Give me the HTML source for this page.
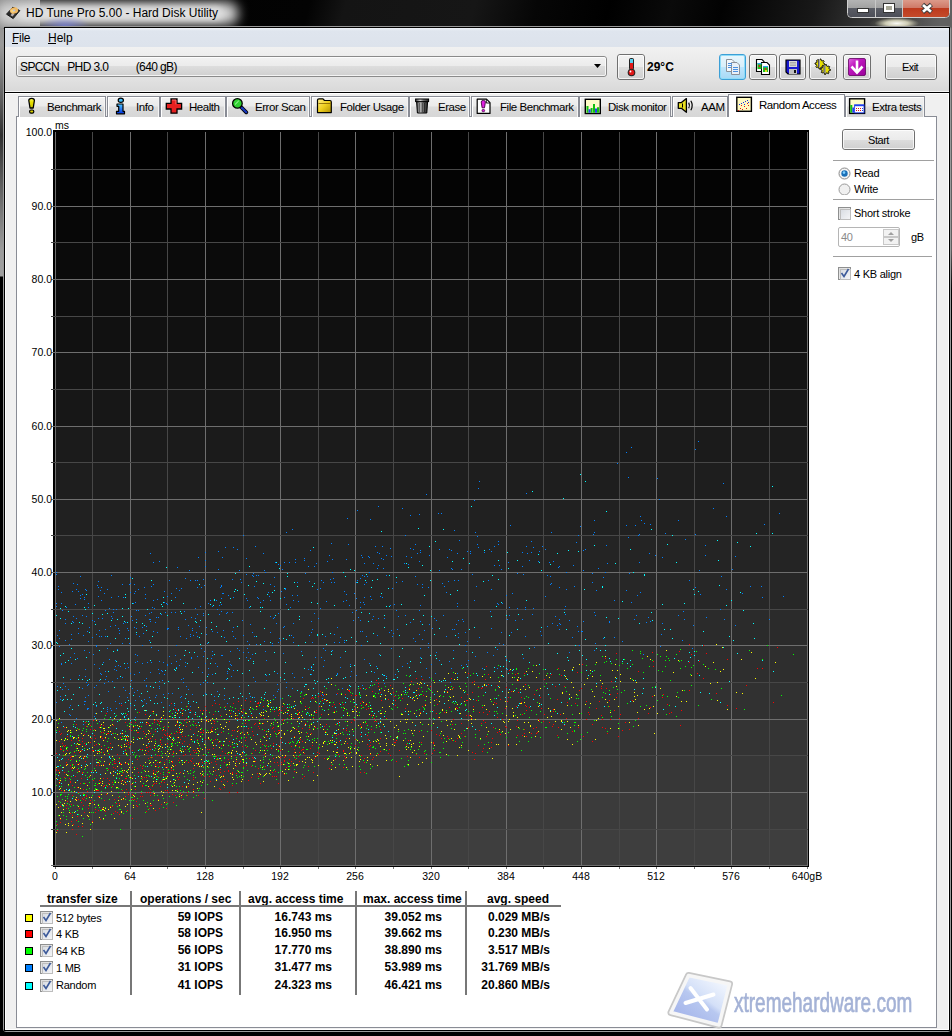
<!DOCTYPE html>
<html><head><meta charset="utf-8">
<style>
*{margin:0;padding:0;box-sizing:border-box}
html,body{width:952px;height:1036px;overflow:hidden;background:#000}
body{position:relative;font-family:"Liberation Sans",sans-serif;color:#000}
.a{position:absolute}
.t{position:absolute;white-space:pre;line-height:1}
/* frame */
#glassL{left:0;top:0;width:3px;height:280px;background:linear-gradient(#8a8a8a 0px,#9a9a9a 45px,#6a6a6a 90px,#303030 135px,#9c9c9c 250px,#a0a0a0 276px,#000 277px)}
#glassR{left:950px;top:0;width:2px;height:290px;background:linear-gradient(#6a6a6a,#5e5e5e 250px,#000 290px)}
#title{left:0;top:0;width:952px;height:28px;overflow:hidden;background:linear-gradient(105deg,#000 0,#030303 300px,#141414 335px,#161616 460px,#060606 520px,#000 590px,#0a0a0a 650px,#020202 700px,#181818 790px,#333 840px,#444 880px,#555 920px,#666 952px)}
#frame1{left:3px;top:26px;width:948px;height:1006px;border:1px solid #9a9a9a;border-radius:3px}
#frame2{left:4px;top:27px;width:946px;height:1004px;border:1px solid #000}
#client{left:5px;top:28px;width:944px;height:1002px;background:#f0f0f0;border-right:1px solid #fff;border-bottom:1px solid #fff;border-left:1px solid #fff}
#menubar{left:5px;top:28px;width:944px;height:19px;background:linear-gradient(#eef2f8,#dfe5ee 3px,#dde3ec)}
#toolbar{left:5px;top:47px;width:944px;height:44px;background:linear-gradient(#f1f1f1,#e6e6e6 25px,#d9d9d9 44px)}
.btn{position:absolute;border:1px solid #707070;border-radius:3px;background:linear-gradient(#f2f2f2,#ebebeb 50%,#dddddd 50%,#cfcfcf)}
.btn:before{content:"";position:absolute;left:0;top:0;right:0;bottom:0;border:1px solid rgba(255,255,255,.75);border-radius:2px}
.tab{position:absolute;top:96px;height:21px;border:1px solid #898c95;border-bottom:none;background:linear-gradient(#f2f2f2,#ebebeb 45%,#dcdcdc 50%,#d6d6d6);box-shadow:inset 1px 1px 0 #fff,inset -1px 0 0 #f4f4f4}
.tab .t{font-size:11.5px;top:4.6px;letter-spacing:-0.45px}
.u{font-size:11px;letter-spacing:-0.25px}
.chk{position:absolute;width:13px;height:13px;border:1px solid #8e8f8f;background:linear-gradient(135deg,#dcdcdc,#f6f6f6)}
.chk:after{content:"";position:absolute;left:1px;top:1px;width:9px;height:9px;border:1px solid #bdbdbd;background:linear-gradient(135deg,#d9dde3,#f4f5f7)}
.sep{position:absolute;height:1px;background:#a0a0a0}
</style></head><body>
<div id="glassL" class="a"></div>
<div id="glassR" class="a"></div>
<div id="title" class="a">
  <div class="a" style="left:0;top:0;width:40px;height:28px;background:linear-gradient(90deg,#8c8c8c,#9a9a9a)"></div>
  <div class="a" style="left:-4px;top:2px;width:242px;height:23px;border-radius:10px;background:#d4d4d4;filter:blur(6px)"></div>
  <div class="a" style="left:18px;top:7px;width:205px;height:13px;border-radius:6px;background:#e0e0e0;filter:blur(3px)"></div>
  <div class="a" style="left:40px;top:16px;width:50px;height:20px;background:radial-gradient(ellipse 50% 50% at 50% 50%,rgba(120,130,230,.7),rgba(120,130,230,0))"></div>
  <div class="a" style="left:866px;top:15px;width:56px;height:14px;background:radial-gradient(ellipse 50% 50% at 55% 60%,rgba(250,250,245,1),rgba(230,228,200,.85) 40%,rgba(90,90,80,.35) 80%,rgba(0,0,0,0))"></div>
  <div class="a" style="left:912px;top:0;width:40px;height:28px;background:linear-gradient(90deg,rgba(0,0,0,0),#606060 70%)"></div>
  <svg class="a" style="left:0;top:0" width="26" height="24" viewBox="0 0 26 24"><path d="M6.5 14.2L12.8 7.2L19.8 10.6L13.2 18.6Z" fill="#2a2a2a" stroke="#1a1a1a" stroke-width="1" stroke-linejoin="round"/><path d="M10.5 15.2L12.6 12.8L14.6 14L12.6 16.6Z" fill="#b8b0b0"/><ellipse cx="14" cy="10.5" rx="4.2" ry="3.1" fill="#f0b860" transform="rotate(-15 14 10.5)"/><ellipse cx="13" cy="11" rx="2" ry="1.4" fill="#f8e090" opacity=".7"/><ellipse cx="14.2" cy="10.4" rx="1.2" ry=".9" fill="#b8c0d8"/></svg>
  <div class="t" style="left:26px;top:7px;font-size:12px;color:#000">HD Tune Pro 5.00 - Hard Disk Utility</div>
  <!-- caption buttons -->
  <svg class="a" style="left:846px;top:0" width="106" height="22" viewBox="0 0 106 22">
    <defs>
      <linearGradient id="gmin" x1="0" y1="0" x2="0" y2="1"><stop offset="0" stop-color="#b4b4b4"/><stop offset=".45" stop-color="#a2a2a2"/><stop offset=".5" stop-color="#5a5c64"/><stop offset="1" stop-color="#4c4e58"/></linearGradient>
      <linearGradient id="gcls" x1="0" y1="0" x2="0" y2="1"><stop offset="0" stop-color="#dc9a8a"/><stop offset=".45" stop-color="#cf7a68"/><stop offset=".5" stop-color="#bd3a1e"/><stop offset="1" stop-color="#c44a2a"/></linearGradient>
    </defs>
    <path d="M1.5 0V13.5Q1.5 17.5 5.5 17.5H99.5Q103.5 17.5 103.5 13.5V0" fill="#2a2a2a" stroke="#d0d0d0" stroke-width="1"/>
    <path d="M2 0H29V17H6Q2 17 2 13Z" fill="url(#gmin)"/>
    <path d="M30 0H56V17H30Z" fill="url(#gmin)"/>
    <path d="M57 0H103V13Q103 17 99 17H57Z" fill="url(#gcls)"/>
    <path d="M29.5 0V17M56.5 0V17" stroke="#c8c8c8" stroke-width="1"/>
    <rect x="11.5" y="8.5" width="11" height="4" fill="#fff" stroke="#333" stroke-width="1"/>
    <rect x="37.5" y="3.5" width="11" height="9" fill="none" stroke="#333" stroke-width="1"/>
    <rect x="39" y="5" width="8" height="6" fill="none" stroke="#fff" stroke-width="2"/>
    <rect x="40" y="6" width="6" height="4" fill="#a8a898"/>
    <path d="M76.6 4.6L85.4 12.2M85.4 4.6L76.6 12.2" stroke="#3a3a3a" stroke-width="4.6" stroke-linecap="butt"/>
    <path d="M77 5L85 11.8M85 5L77 11.8" stroke="#fff" stroke-width="2.8" stroke-linecap="butt"/>
  </svg>
</div>
<div id="frame1" class="a"></div>
<div id="frame2" class="a"></div>
<div id="client" class="a"></div>
<div id="menubar" class="a"></div>
<div class="t" style="left:12px;top:32px;font-size:12px;letter-spacing:-0.3px">File</div>
<div class="a" style="left:12px;top:43px;width:6px;height:1px;background:#000"></div>
<div class="t" style="left:48px;top:32px;font-size:12px">Help</div>
<div class="a" style="left:48px;top:43px;width:8px;height:1px;background:#000"></div>
<div id="toolbar" class="a"></div>
<div class="a" style="left:5px;top:91px;width:944px;height:1px;background:#f6f6f6"></div>
<div class="a" style="left:5px;top:92px;width:944px;height:1px;background:#000"></div>
<div class="a" style="left:5px;top:93px;width:944px;height:1px;background:#fff"></div>
<!-- drive combo -->
<div class="btn" style="left:16px;top:56px;width:591px;height:21px;border-color:#8a8a8a"></div>
<div class="t" style="left:20px;top:61px;font-size:12px;letter-spacing:-0.6px">SPCCN   PHD 3.0          (640 gB)</div>
<svg class="a" style="left:594px;top:64px" width="8" height="5"><path d="M0 0H7L3.5 4Z" fill="#000"/></svg>
<!-- thermometer -->
<div class="btn" style="left:617px;top:54px;width:28px;height:26px"></div>
<svg class="a" style="left:624px;top:57px" width="14" height="20" viewBox="0 0 14 20"><rect x="5" y="1" width="5" height="12" rx="2" fill="#222"/><rect x="6" y="2" width="3" height="4" fill="#58d0f0"/><rect x="6" y="6" width="3" height="8" fill="#e01818"/><circle cx="7.5" cy="15.5" r="3.8" fill="#222"/><circle cx="7.5" cy="15.5" r="2.8" fill="#e01818"/><circle cx="6.5" cy="14.5" r="0.9" fill="#fff"/></svg>
<div class="t" style="left:647px;top:61px;font-size:12px;font-weight:bold">29°C</div>
<!-- toolbar buttons -->
<div class="a" style="left:719px;top:54px;width:27px;height:26px;border:1px solid #3c9fd6;border-radius:3px;background:linear-gradient(#e8f6fd,#d8effa 50%,#bee6fd 50%,#a7d9f5);box-shadow:inset 0 0 0 1px #8fdcf8"></div>
<svg class="a" style="left:724px;top:58px" width="18" height="18" viewBox="0 0 18 18"><path d="M2.5 1.5H8L10 3.5V13.5H2.5Z" fill="#f4f8fc" stroke="#8a9098"/><path d="M7.5 4.5H13L15.5 7V16.5H7.5Z" fill="#e8f0f8" stroke="#8a9098"/><path d="M4 5.5H8M4 7.5H8M4 9.5H7M9 9.5H14M9 11.5H14M9 13.5H14" stroke="#4a90e0" fill="none"/></svg>
<div class="btn" style="left:749px;top:54px;width:28px;height:26px"></div>
<svg class="a" style="left:754px;top:58px" width="18" height="18" viewBox="0 0 18 18"><path d="M2.5 1.5H8L10 3.5V13.5H2.5Z" fill="#fff" stroke="#000" stroke-width="1.1"/><path d="M7.5 4.5H13L15.5 7V16.5H7.5Z" fill="#fff" stroke="#000" stroke-width="1.1"/><rect x="3.5" y="5" width="4" height="6" fill="#20c020"/><rect x="3.5" y="5" width="4" height="1.3" fill="#30a0f0"/><rect x="9" y="8" width="5" height="6" fill="#20c020"/><rect x="9" y="8" width="5" height="1.3" fill="#30a0f0"/><circle cx="5.5" cy="8" r="1" fill="#e02020"/><circle cx="11.5" cy="11" r="1" fill="#e02020"/><rect x="11" y="12" width="2" height="2" fill="#e0e020"/></svg>
<div class="btn" style="left:779px;top:54px;width:27px;height:26px"></div>
<svg class="a" style="left:784px;top:58px" width="18" height="18" viewBox="0 0 18 18"><path d="M2 2H16V16H4L2 14Z" fill="#1818d0" stroke="#000" stroke-width="1.2"/><rect x="5" y="3" width="8" height="6" fill="#d8d8d8"/><path d="M6 4.5H12M6 6H12M6 7.5H12" stroke="#999" stroke-width="0.7"/><rect x="5" y="11" width="8" height="5" fill="#c0c0c0"/><rect x="10" y="12" width="2" height="3" fill="#111"/></svg>
<div class="btn" style="left:809px;top:54px;width:28px;height:26px"></div>
<svg class="a" style="left:813px;top:57px" width="20" height="20" viewBox="0 0 20 20"><path d="M12.0 7.0L11.9 8.0L10.3 8.4L10.0 9.0L10.5 10.5L9.8 11.2L8.4 10.3L7.7 10.5L7.0 12.0L6.0 11.9L5.6 10.3L5.0 10.0L3.5 10.5L2.8 9.8L3.7 8.4L3.5 7.7L2.0 7.0L2.1 6.0L3.7 5.6L4.0 5.0L3.5 3.5L4.2 2.8L5.6 3.7L6.3 3.5L7.0 2.0L8.0 2.1L8.4 3.7L9.0 4.0L10.5 3.5L11.2 4.2L10.3 5.6L10.5 6.3Z" fill="#e8e000" stroke="#111" stroke-width="1"/><path d="M17.5 12.5L17.4 13.5L15.8 13.9L15.5 14.5L16.0 16.0L15.3 16.7L13.9 15.8L13.2 16.0L12.5 17.5L11.5 17.4L11.1 15.8L10.5 15.5L9.0 16.0L8.3 15.3L9.2 13.9L9.0 13.2L7.5 12.5L7.6 11.5L9.2 11.1L9.5 10.5L9.0 9.0L9.7 8.3L11.1 9.2L11.8 9.0L12.5 7.5L13.5 7.6L13.9 9.2L14.5 9.5L16.0 9.0L16.7 9.7L15.8 11.1L16.0 11.8Z" fill="#e8e000" stroke="#111" stroke-width="1"/><path d="M6 2V10M11.5 8V16" stroke="#555" stroke-width="2"/><path d="M6.5 2V10M12 8V16" stroke="#ddd" stroke-width=".6"/></svg>
<div class="btn" style="left:843px;top:54px;width:28px;height:26px"></div>
<svg class="a" style="left:847px;top:57px" width="20" height="20" viewBox="0 0 20 20"><defs><linearGradient id="gpur" x1="0" y1="0" x2="1" y2="1"><stop offset="0" stop-color="#e070e0"/><stop offset=".35" stop-color="#c018c0"/><stop offset="1" stop-color="#9a009a"/></linearGradient></defs><rect x="1.5" y="1.5" width="17" height="17" rx="1.5" fill="url(#gpur)" stroke="#600060" stroke-width=".8"/><path d="M10 3.5V14.5" stroke="#fff" stroke-width="2.6"/><path d="M4.5 9.5L10 15.5L15.5 9.5" stroke="#fff" stroke-width="2.6" fill="none"/></svg>
<div class="btn" style="left:885px;top:54px;width:52px;height:26px"></div>
<div class="t" style="left:902px;top:62px;font-size:11px;letter-spacing:-0.6px">Exit</div>

<div class="a" style="left:16px;top:116px;width:921px;height:912px;border:1px solid #898c95;background:#fff"></div>
<div class="tab" style="left:18px;width:88px"><div class="t" style="left:28px">Benchmark</div></div>
<div class="tab" style="left:107px;width:53px"><div class="t" style="left:28px">Info</div></div>
<div class="tab" style="left:160px;width:66px"><div class="t" style="left:28px">Health</div></div>
<div class="tab" style="left:226px;width:84px"><div class="t" style="left:28px">Error Scan</div></div>
<div class="tab" style="left:311px;width:98px"><div class="t" style="left:28px">Folder Usage</div></div>
<div class="tab" style="left:409px;width:61px"><div class="t" style="left:28px">Erase</div></div>
<div class="tab" style="left:471px;width:108px"><div class="t" style="left:28px">File Benchmark</div></div>
<div class="tab" style="left:579px;width:92px"><div class="t" style="left:28px">Disk monitor</div></div>
<div class="tab" style="left:672px;width:56px"><div class="t" style="left:28px">AAM</div></div>
<div class="tab" style="left:728px;top:94px;width:117px;height:23px;background:#fff;box-shadow:none"><div class="t" style="left:30px">Random Access</div></div>
<div class="tab" style="left:845px;width:80px"><div class="t" style="left:26px">Extra tests</div></div>
<svg class="a" style="left:0;top:0" width="952" height="120" viewBox="0 0 952 120">
 <defs>
  <linearGradient id="gy" x1="0" y1="0" x2="0" y2="1"><stop offset="0" stop-color="#f8f860"/><stop offset=".4" stop-color="#e8e000"/><stop offset="1" stop-color="#c8c000"/></linearGradient>
  <linearGradient id="gb" x1="0" y1="0" x2="0" y2="1"><stop offset="0" stop-color="#50c8ff"/><stop offset="1" stop-color="#0030e0"/></linearGradient>
  <linearGradient id="gf" x1="0" y1="0" x2="1" y2="1"><stop offset="0" stop-color="#fff090"/><stop offset=".5" stop-color="#f0d020"/><stop offset="1" stop-color="#b09000"/></linearGradient>
  <linearGradient id="gt" x1="0" y1="0" x2="1" y2="0"><stop offset="0" stop-color="#303030"/><stop offset=".35" stop-color="#d8d8d8"/><stop offset=".6" stop-color="#707070"/><stop offset="1" stop-color="#202020"/></linearGradient>
 </defs>
 <!-- benchmark ! -->
 <path d="M28.8 100.5Q28.8 98.3 31.6 98.3Q34.4 98.3 34.4 100.5L33.2 108H30Z" fill="url(#gy)" stroke="#000" stroke-width="1.3" stroke-linejoin="round"/>
 <rect x="29.6" y="110" width="4.2" height="3.2" rx="1.4" fill="#d8d000" stroke="#000" stroke-width="1.2"/>
 <!-- info i -->
 <ellipse cx="120.8" cy="100.3" rx="2.6" ry="2.1" fill="#40c0ff" stroke="#000" stroke-width="1.2"/>
 <path d="M117 104H123V111.3H124.5V113.8H116.5V111.3H118.7V106.3H117Z" fill="url(#gb)" stroke="#000" stroke-width="1.2" stroke-linejoin="round"/>
 <!-- health cross -->
 <path d="M171 99H177V103.3H181.6V109H177V113.2H171V109H166.3V103.3H171Z" fill="#e62020" stroke="#000" stroke-width="1.3"/>
 <path d="M172 100H176V104.3" stroke="#ff8080" stroke-width=".8" fill="none"/>
 <!-- error scan -->
 <path d="M241.5 107.5L246.3 112.3" stroke="#000" stroke-width="3.8" stroke-linecap="round"/>
 <path d="M241.5 107.5L246.3 112.3" stroke="#1838c0" stroke-width="2" stroke-linecap="round"/>
 <circle cx="237.4" cy="103.4" r="4.8" fill="#30d030" stroke="#000" stroke-width="1.3"/>
 <path d="M235 104.5L238.8 100.8" stroke="#b0ffb0" stroke-width="1"/>
 <!-- folder -->
 <path d="M317.5 100Q317.5 98.8 319 98.8H323L324.5 100.5H330Q331.3 100.5 331.3 102V112.6H317.5Z" fill="url(#gf)" stroke="#000" stroke-width="1.2" stroke-linejoin="round"/>
 <path d="M318.5 103.5H330.5" stroke="#806000" stroke-width=".8"/>
 <!-- erase trash -->
 <rect x="415.6" y="99" width="13" height="2.6" fill="url(#gt)" stroke="#000" stroke-width="1"/>
 <path d="M416.6 101.8H427.6L426.8 113H417.4Z" fill="url(#gt)" stroke="#000" stroke-width="1"/>
 <path d="M419.8 103V112M422.2 103V112M424.6 103V112" stroke="#111" stroke-width=".7"/>
 <!-- file benchmark -->
 <path d="M477.2 99.2H486.5L490 102.7V113.4H477.2Z" fill="#fff" stroke="#000" stroke-width="1.2" stroke-linejoin="round"/>
 <path d="M486.3 99.5V103H489.8" fill="none" stroke="#000" stroke-width=".9"/>
 <path d="M481.2 102Q481.2 100.4 483.3 100.4Q485.4 100.4 485.4 102L484.5 107.8H482.1Z" fill="#e020e0" stroke="#400040" stroke-width=".9"/>
 <rect x="482" y="109.5" width="2.6" height="2.2" rx=".8" fill="#e020e0" stroke="#400040" stroke-width=".7"/>
 <!-- disk monitor -->
 <rect x="585.3" y="99.3" width="15" height="14.2" fill="#fffcc8" stroke="#000" stroke-width="1.4"/>
 <path d="M586.5 112.7V106H588.5V112.7ZM590.6 112.7V108H592.6V112.7ZM593 112.7V104H595V112.7ZM597 112.7V107.3H599.2V112.7Z" fill="#10c010"/>
 <path d="M588.5 112.7V109.2H590.6V112.7ZM595 112.7V108.5H597V112.7Z" fill="#2040f0"/>
 <!-- AAM speaker -->
 <path d="M678.3 102.6H681.4L686.4 98.6V112.3L681.4 108.3H678.3Z" fill="#e8e020" stroke="#000" stroke-width="1.3" stroke-linejoin="round"/>
 <path d="M682.5 103.5V107.5" stroke="#000" stroke-width="1"/>
 <path d="M688.7 102.6Q690.2 105.4 688.7 108.3M690.8 100.8Q693.7 105.4 690.8 110.2" stroke="#000" stroke-width="1.2" fill="none"/>
 <!-- random access -->
 <rect x="736.8" y="97.3" width="14.6" height="14" fill="#fffac0" stroke="#000" stroke-width="1.4"/>
 <path d="M738 110h1v1h-1zM740 108h1v1h-1zM742 109h1v1h-1zM744 106h1v1h-1zM746 108h1v1h-1zM748 105h1v1h-1zM741 105h1v1h-1zM747 103h1v1h-1z" fill="#e01818"/>
 <path d="M739 104h1v1h-1zM741 103h1v1h-1zM743 102h1v1h-1zM745 101h1v1h-1zM747 100h1v1h-1zM748 102h1v1h-1zM744 104h1v1h-1z" fill="#1830e0"/>
 <!-- extra tests -->
 <rect x="849.6" y="98.8" width="15" height="14.6" fill="#fffcc8" stroke="#000" stroke-width="1.4"/>
 <rect x="850.3" y="105" width="2" height="7.7" fill="#10c010"/>
 <rect x="852.3" y="107.5" width="1.8" height="5.2" fill="#2040f0"/>
 <rect x="854.6" y="104.8" width="9.4" height="8" fill="#fff" stroke="#2040f0" stroke-width=".9"/>
 <rect x="854.6" y="104.8" width="9.4" height="1.4" fill="#2040f0"/>
 <path d="M856 108h1v1h-1zM858 108h1v1h-1zM860 108h1v1h-1zM856 110h1v1h-1zM858 110h1v1h-1zM860 110h1v1h-1z" fill="#e01818"/>
 <path d="M862 108h1v1h-1zM862 110h1v1h-1z" fill="#2040e0"/>
</svg>

<div class="a" style="left:53px;top:130px;width:756px;height:737px;background:#000"></div>
<div class="a" style="left:55px;top:131px;width:753px;height:39px;background:rgb(1,1,1)"></div>
<div class="a" style="left:55px;top:169px;width:753px;height:38px;background:rgb(4,4,4)"></div>
<div class="a" style="left:55px;top:206px;width:753px;height:37px;background:rgb(7,7,7)"></div>
<div class="a" style="left:55px;top:242px;width:753px;height:38px;background:rgb(11,11,11)"></div>
<div class="a" style="left:55px;top:279px;width:753px;height:38px;background:rgb(14,14,14)"></div>
<div class="a" style="left:55px;top:316px;width:753px;height:37px;background:rgb(17,17,17)"></div>
<div class="a" style="left:55px;top:352px;width:753px;height:38px;background:rgb(20,20,20)"></div>
<div class="a" style="left:55px;top:389px;width:753px;height:38px;background:rgb(23,23,23)"></div>
<div class="a" style="left:55px;top:426px;width:753px;height:37px;background:rgb(27,27,27)"></div>
<div class="a" style="left:55px;top:462px;width:753px;height:38px;background:rgb(30,30,30)"></div>
<div class="a" style="left:55px;top:499px;width:753px;height:37px;background:rgb(33,33,33)"></div>
<div class="a" style="left:55px;top:535px;width:753px;height:38px;background:rgb(36,36,36)"></div>
<div class="a" style="left:55px;top:572px;width:753px;height:38px;background:rgb(39,39,39)"></div>
<div class="a" style="left:55px;top:609px;width:753px;height:37px;background:rgb(43,43,43)"></div>
<div class="a" style="left:55px;top:645px;width:753px;height:38px;background:rgb(46,46,46)"></div>
<div class="a" style="left:55px;top:682px;width:753px;height:38px;background:rgb(49,49,49)"></div>
<div class="a" style="left:55px;top:719px;width:753px;height:37px;background:rgb(52,52,52)"></div>
<div class="a" style="left:55px;top:755px;width:753px;height:38px;background:rgb(55,55,55)"></div>
<div class="a" style="left:55px;top:792px;width:753px;height:38px;background:rgb(59,59,59)"></div>
<div class="a" style="left:55px;top:829px;width:753px;height:37px;background:rgb(62,62,62)"></div>
<svg class="a" style="left:0;top:0" width="952" height="1036" shape-rendering="crispEdges">
<rect x="55" y="132" width="1" height="734" fill="#6e6e6e"/>
<rect x="92" y="132" width="1" height="734" fill="#474747"/>
<rect x="130" y="132" width="1" height="734" fill="#6e6e6e"/>
<rect x="167" y="132" width="1" height="734" fill="#474747"/>
<rect x="205" y="132" width="1" height="734" fill="#6e6e6e"/>
<rect x="243" y="132" width="1" height="734" fill="#474747"/>
<rect x="280" y="132" width="1" height="734" fill="#6e6e6e"/>
<rect x="318" y="132" width="1" height="734" fill="#474747"/>
<rect x="355" y="132" width="1" height="734" fill="#6e6e6e"/>
<rect x="393" y="132" width="1" height="734" fill="#474747"/>
<rect x="431" y="132" width="1" height="734" fill="#6e6e6e"/>
<rect x="468" y="132" width="1" height="734" fill="#474747"/>
<rect x="506" y="132" width="1" height="734" fill="#6e6e6e"/>
<rect x="543" y="132" width="1" height="734" fill="#474747"/>
<rect x="581" y="132" width="1" height="734" fill="#6e6e6e"/>
<rect x="619" y="132" width="1" height="734" fill="#474747"/>
<rect x="656" y="132" width="1" height="734" fill="#6e6e6e"/>
<rect x="694" y="132" width="1" height="734" fill="#474747"/>
<rect x="731" y="132" width="1" height="734" fill="#6e6e6e"/>
<rect x="769" y="132" width="1" height="734" fill="#474747"/>
<rect x="807" y="132" width="1" height="734" fill="#6e6e6e"/>
<rect x="55" y="865" width="753" height="1" fill="#6e6e6e"/>
<rect x="55" y="829" width="753" height="1" fill="#474747"/>
<rect x="55" y="792" width="753" height="1" fill="#6e6e6e"/>
<rect x="55" y="755" width="753" height="1" fill="#474747"/>
<rect x="55" y="719" width="753" height="1" fill="#6e6e6e"/>
<rect x="55" y="682" width="753" height="1" fill="#474747"/>
<rect x="55" y="645" width="753" height="1" fill="#6e6e6e"/>
<rect x="55" y="609" width="753" height="1" fill="#474747"/>
<rect x="55" y="572" width="753" height="1" fill="#6e6e6e"/>
<rect x="55" y="535" width="753" height="1" fill="#474747"/>
<rect x="55" y="499" width="753" height="1" fill="#6e6e6e"/>
<rect x="55" y="462" width="753" height="1" fill="#474747"/>
<rect x="55" y="426" width="753" height="1" fill="#6e6e6e"/>
<rect x="55" y="389" width="753" height="1" fill="#474747"/>
<rect x="55" y="352" width="753" height="1" fill="#6e6e6e"/>
<rect x="55" y="316" width="753" height="1" fill="#474747"/>
<rect x="55" y="279" width="753" height="1" fill="#6e6e6e"/>
<rect x="55" y="242" width="753" height="1" fill="#474747"/>
<rect x="55" y="206" width="753" height="1" fill="#6e6e6e"/>
<rect x="55" y="169" width="753" height="1" fill="#474747"/>
<path fill="#ffff00" d="M325 732h1v1h-1zM539 703h1v1h-1zM425 705h1v1h-1zM137 725h1v1h-1zM167 776h1v1h-1zM513 712h1v1h-1zM56 767h1v1h-1zM463 690h1v1h-1zM442 709h1v1h-1zM242 752h1v1h-1zM168 722h1v1h-1zM158 749h1v1h-1zM149 716h1v1h-1zM231 756h1v1h-1zM260 774h1v1h-1zM285 712h1v1h-1zM742 693h1v1h-1zM439 696h1v1h-1zM323 729h1v1h-1zM710 683h1v1h-1zM133 805h1v1h-1zM112 747h1v1h-1zM318 765h1v1h-1zM70 730h1v1h-1zM67 731h1v1h-1zM265 756h1v1h-1zM241 775h1v1h-1zM564 670h1v1h-1zM327 734h1v1h-1zM265 774h1v1h-1zM256 744h1v1h-1zM146 781h1v1h-1zM59 782h1v1h-1zM124 746h1v1h-1zM366 704h1v1h-1zM127 740h1v1h-1zM197 782h1v1h-1zM56 778h1v1h-1zM470 715h1v1h-1zM110 725h1v1h-1zM154 793h1v1h-1zM520 703h1v1h-1zM263 715h1v1h-1zM486 709h1v1h-1zM334 744h1v1h-1zM400 721h1v1h-1zM87 785h1v1h-1zM279 709h1v1h-1zM262 767h1v1h-1zM510 729h1v1h-1zM193 791h1v1h-1zM310 719h1v1h-1zM75 799h1v1h-1zM205 717h1v1h-1zM177 721h1v1h-1zM108 727h1v1h-1zM458 735h1v1h-1zM201 812h1v1h-1zM676 696h1v1h-1zM305 709h1v1h-1zM314 711h1v1h-1zM333 760h1v1h-1zM356 711h1v1h-1zM108 731h1v1h-1zM229 710h1v1h-1zM143 744h1v1h-1zM211 723h1v1h-1zM88 742h1v1h-1zM649 708h1v1h-1zM133 795h1v1h-1zM353 711h1v1h-1zM167 784h1v1h-1zM513 716h1v1h-1zM347 689h1v1h-1zM101 765h1v1h-1zM484 705h1v1h-1zM605 656h1v1h-1zM547 717h1v1h-1zM294 701h1v1h-1zM106 734h1v1h-1zM124 770h1v1h-1zM579 713h1v1h-1zM285 769h1v1h-1zM120 719h1v1h-1zM524 722h1v1h-1zM335 767h1v1h-1zM294 708h1v1h-1zM200 729h1v1h-1zM215 732h1v1h-1zM142 738h1v1h-1zM68 823h1v1h-1zM516 744h1v1h-1zM242 752h1v1h-1zM282 771h1v1h-1zM176 753h1v1h-1zM407 704h1v1h-1zM63 767h1v1h-1zM198 750h1v1h-1zM65 824h1v1h-1zM98 805h1v1h-1zM647 656h1v1h-1zM345 753h1v1h-1zM223 728h1v1h-1zM270 770h1v1h-1zM512 677h1v1h-1zM186 786h1v1h-1zM305 762h1v1h-1zM361 727h1v1h-1zM191 736h1v1h-1zM267 700h1v1h-1zM417 698h1v1h-1zM554 709h1v1h-1zM108 809h1v1h-1zM587 678h1v1h-1zM56 720h1v1h-1zM408 764h1v1h-1zM453 696h1v1h-1zM103 809h1v1h-1zM219 741h1v1h-1zM457 704h1v1h-1zM59 760h1v1h-1zM327 700h1v1h-1zM439 701h1v1h-1zM264 750h1v1h-1zM389 706h1v1h-1zM137 768h1v1h-1zM126 771h1v1h-1zM194 765h1v1h-1zM119 763h1v1h-1zM187 771h1v1h-1zM611 716h1v1h-1zM296 764h1v1h-1zM184 762h1v1h-1zM155 774h1v1h-1zM617 670h1v1h-1zM231 716h1v1h-1zM681 701h1v1h-1zM266 740h1v1h-1zM268 703h1v1h-1zM538 720h1v1h-1zM401 714h1v1h-1zM300 737h1v1h-1zM223 745h1v1h-1zM518 677h1v1h-1zM216 780h1v1h-1zM572 669h1v1h-1zM78 764h1v1h-1zM224 719h1v1h-1zM268 731h1v1h-1zM615 664h1v1h-1zM147 780h1v1h-1zM450 697h1v1h-1zM356 752h1v1h-1zM383 724h1v1h-1zM328 714h1v1h-1zM657 713h1v1h-1zM181 795h1v1h-1zM210 732h1v1h-1zM128 736h1v1h-1zM72 756h1v1h-1zM132 783h1v1h-1zM562 693h1v1h-1zM480 738h1v1h-1zM94 741h1v1h-1zM313 729h1v1h-1zM247 732h1v1h-1zM308 736h1v1h-1zM346 767h1v1h-1zM170 737h1v1h-1zM635 699h1v1h-1zM241 717h1v1h-1zM327 744h1v1h-1zM331 769h1v1h-1zM121 764h1v1h-1zM76 761h1v1h-1zM216 718h1v1h-1zM416 690h1v1h-1zM457 755h1v1h-1zM392 703h1v1h-1zM94 790h1v1h-1zM559 674h1v1h-1zM446 720h1v1h-1zM517 717h1v1h-1zM270 734h1v1h-1zM562 692h1v1h-1zM71 745h1v1h-1zM65 755h1v1h-1zM61 759h1v1h-1zM148 771h1v1h-1zM146 745h1v1h-1zM122 780h1v1h-1zM293 727h1v1h-1zM68 784h1v1h-1zM305 742h1v1h-1zM114 818h1v1h-1zM357 740h1v1h-1zM62 804h1v1h-1zM171 767h1v1h-1zM595 739h1v1h-1zM277 722h1v1h-1zM454 679h1v1h-1zM345 741h1v1h-1zM317 755h1v1h-1zM124 744h1v1h-1zM296 772h1v1h-1zM68 730h1v1h-1zM446 741h1v1h-1zM633 701h1v1h-1zM493 704h1v1h-1zM72 817h1v1h-1zM183 773h1v1h-1zM175 780h1v1h-1zM94 755h1v1h-1zM326 694h1v1h-1zM443 735h1v1h-1zM173 738h1v1h-1zM502 731h1v1h-1zM442 710h1v1h-1zM100 774h1v1h-1zM419 746h1v1h-1zM523 686h1v1h-1zM126 746h1v1h-1zM296 765h1v1h-1zM333 751h1v1h-1zM316 702h1v1h-1zM88 724h1v1h-1zM347 721h1v1h-1zM329 702h1v1h-1zM465 672h1v1h-1zM448 700h1v1h-1zM178 737h1v1h-1zM386 743h1v1h-1zM506 715h1v1h-1zM534 694h1v1h-1zM112 724h1v1h-1zM64 790h1v1h-1zM340 733h1v1h-1zM133 807h1v1h-1zM291 716h1v1h-1zM605 699h1v1h-1zM201 719h1v1h-1zM148 786h1v1h-1zM237 744h1v1h-1zM344 708h1v1h-1zM90 775h1v1h-1zM202 782h1v1h-1zM102 781h1v1h-1zM347 715h1v1h-1zM471 723h1v1h-1zM200 781h1v1h-1zM198 764h1v1h-1zM278 756h1v1h-1zM133 739h1v1h-1zM146 722h1v1h-1zM180 724h1v1h-1zM237 731h1v1h-1zM83 758h1v1h-1zM408 747h1v1h-1zM299 712h1v1h-1zM167 751h1v1h-1zM82 746h1v1h-1zM416 695h1v1h-1zM101 749h1v1h-1zM102 783h1v1h-1zM101 757h1v1h-1zM83 757h1v1h-1zM550 711h1v1h-1zM154 777h1v1h-1zM170 781h1v1h-1zM473 709h1v1h-1zM322 746h1v1h-1zM122 770h1v1h-1zM226 722h1v1h-1zM524 702h1v1h-1zM199 725h1v1h-1zM379 689h1v1h-1zM89 803h1v1h-1zM390 721h1v1h-1zM426 758h1v1h-1zM467 728h1v1h-1zM355 695h1v1h-1zM197 788h1v1h-1zM77 748h1v1h-1zM267 705h1v1h-1zM412 722h1v1h-1zM124 736h1v1h-1zM153 762h1v1h-1zM276 757h1v1h-1zM405 719h1v1h-1zM538 731h1v1h-1zM99 783h1v1h-1zM121 783h1v1h-1zM444 678h1v1h-1zM337 752h1v1h-1zM386 745h1v1h-1zM751 652h1v1h-1zM596 720h1v1h-1zM482 676h1v1h-1zM426 696h1v1h-1zM208 732h1v1h-1zM335 733h1v1h-1zM121 799h1v1h-1zM413 743h1v1h-1zM412 752h1v1h-1zM386 738h1v1h-1zM231 752h1v1h-1zM201 721h1v1h-1zM219 747h1v1h-1zM66 727h1v1h-1zM484 685h1v1h-1zM279 757h1v1h-1zM205 747h1v1h-1zM282 755h1v1h-1zM386 760h1v1h-1zM202 713h1v1h-1zM471 719h1v1h-1zM567 721h1v1h-1zM205 768h1v1h-1zM104 754h1v1h-1zM414 730h1v1h-1zM727 709h1v1h-1zM107 751h1v1h-1zM380 746h1v1h-1zM466 709h1v1h-1zM569 694h1v1h-1zM98 762h1v1h-1zM87 772h1v1h-1zM705 666h1v1h-1zM96 713h1v1h-1zM118 739h1v1h-1zM297 764h1v1h-1zM232 750h1v1h-1zM406 744h1v1h-1zM123 798h1v1h-1zM561 721h1v1h-1zM134 796h1v1h-1zM420 682h1v1h-1zM78 750h1v1h-1zM245 720h1v1h-1zM66 753h1v1h-1zM173 775h1v1h-1zM172 775h1v1h-1zM385 735h1v1h-1zM236 751h1v1h-1zM74 791h1v1h-1zM741 659h1v1h-1zM529 732h1v1h-1zM563 713h1v1h-1zM145 771h1v1h-1zM208 737h1v1h-1zM138 750h1v1h-1zM99 744h1v1h-1zM66 819h1v1h-1zM259 773h1v1h-1zM98 783h1v1h-1zM118 782h1v1h-1zM499 687h1v1h-1zM250 707h1v1h-1zM121 747h1v1h-1zM352 766h1v1h-1zM153 774h1v1h-1zM271 723h1v1h-1zM160 721h1v1h-1zM266 734h1v1h-1zM327 750h1v1h-1zM276 749h1v1h-1zM208 738h1v1h-1zM437 691h1v1h-1zM513 715h1v1h-1zM119 805h1v1h-1zM103 818h1v1h-1zM94 804h1v1h-1zM678 660h1v1h-1zM600 680h1v1h-1zM139 726h1v1h-1zM654 733h1v1h-1zM130 777h1v1h-1zM261 715h1v1h-1zM256 717h1v1h-1zM561 729h1v1h-1zM69 790h1v1h-1zM173 740h1v1h-1zM311 724h1v1h-1zM78 787h1v1h-1zM141 776h1v1h-1zM241 705h1v1h-1zM521 703h1v1h-1zM414 700h1v1h-1zM470 699h1v1h-1zM414 750h1v1h-1zM377 739h1v1h-1zM489 748h1v1h-1zM359 761h1v1h-1zM396 737h1v1h-1zM168 756h1v1h-1zM115 782h1v1h-1zM411 730h1v1h-1zM114 737h1v1h-1zM567 739h1v1h-1zM309 757h1v1h-1zM179 725h1v1h-1zM592 691h1v1h-1zM110 772h1v1h-1zM265 753h1v1h-1zM87 765h1v1h-1zM644 709h1v1h-1zM297 714h1v1h-1zM448 687h1v1h-1zM160 762h1v1h-1zM446 754h1v1h-1zM373 696h1v1h-1zM336 742h1v1h-1zM615 677h1v1h-1zM226 714h1v1h-1zM217 734h1v1h-1zM366 695h1v1h-1zM475 719h1v1h-1zM182 731h1v1h-1zM352 729h1v1h-1zM131 789h1v1h-1zM284 734h1v1h-1zM420 713h1v1h-1zM77 743h1v1h-1zM390 693h1v1h-1zM60 818h1v1h-1zM629 722h1v1h-1zM242 759h1v1h-1zM214 754h1v1h-1zM385 695h1v1h-1zM270 709h1v1h-1zM392 688h1v1h-1zM84 756h1v1h-1zM290 731h1v1h-1zM288 763h1v1h-1zM585 704h1v1h-1zM68 825h1v1h-1zM235 713h1v1h-1zM329 743h1v1h-1zM284 773h1v1h-1zM80 788h1v1h-1zM307 757h1v1h-1zM136 730h1v1h-1zM125 806h1v1h-1zM518 727h1v1h-1zM126 736h1v1h-1zM235 715h1v1h-1zM406 722h1v1h-1zM376 725h1v1h-1zM285 755h1v1h-1zM451 686h1v1h-1zM241 726h1v1h-1zM322 726h1v1h-1zM461 745h1v1h-1zM357 749h1v1h-1zM335 744h1v1h-1zM213 767h1v1h-1zM288 769h1v1h-1zM209 763h1v1h-1zM402 714h1v1h-1zM202 771h1v1h-1zM241 742h1v1h-1zM410 740h1v1h-1zM260 747h1v1h-1zM183 751h1v1h-1zM468 720h1v1h-1zM202 774h1v1h-1zM484 684h1v1h-1zM433 723h1v1h-1zM232 742h1v1h-1zM380 713h1v1h-1zM66 749h1v1h-1zM206 720h1v1h-1zM499 681h1v1h-1zM299 733h1v1h-1zM288 710h1v1h-1zM349 753h1v1h-1zM357 715h1v1h-1zM302 761h1v1h-1zM220 777h1v1h-1zM121 811h1v1h-1zM164 764h1v1h-1zM164 802h1v1h-1zM224 741h1v1h-1zM775 662h1v1h-1zM189 721h1v1h-1zM232 777h1v1h-1zM198 743h1v1h-1zM300 701h1v1h-1zM610 728h1v1h-1zM530 726h1v1h-1zM200 773h1v1h-1zM153 773h1v1h-1zM524 736h1v1h-1zM255 742h1v1h-1zM362 741h1v1h-1zM80 756h1v1h-1zM505 701h1v1h-1zM172 739h1v1h-1zM255 761h1v1h-1zM126 753h1v1h-1zM220 741h1v1h-1zM469 698h1v1h-1zM468 750h1v1h-1zM245 712h1v1h-1zM419 715h1v1h-1zM237 770h1v1h-1zM198 763h1v1h-1zM281 737h1v1h-1zM128 764h1v1h-1zM174 782h1v1h-1zM376 741h1v1h-1zM421 730h1v1h-1zM74 752h1v1h-1zM394 727h1v1h-1zM459 737h1v1h-1zM231 753h1v1h-1zM76 797h1v1h-1zM360 759h1v1h-1zM145 710h1v1h-1zM336 752h1v1h-1zM200 736h1v1h-1zM332 742h1v1h-1zM150 803h1v1h-1zM246 713h1v1h-1zM270 702h1v1h-1zM329 756h1v1h-1zM128 775h1v1h-1zM637 695h1v1h-1zM163 792h1v1h-1zM170 749h1v1h-1zM149 731h1v1h-1zM78 744h1v1h-1zM221 727h1v1h-1zM422 762h1v1h-1zM378 740h1v1h-1zM125 762h1v1h-1zM103 740h1v1h-1zM176 773h1v1h-1zM420 722h1v1h-1zM252 717h1v1h-1zM572 744h1v1h-1zM344 753h1v1h-1zM323 743h1v1h-1zM419 684h1v1h-1zM406 746h1v1h-1zM186 787h1v1h-1zM149 763h1v1h-1zM228 729h1v1h-1zM252 774h1v1h-1zM105 737h1v1h-1zM229 764h1v1h-1zM334 719h1v1h-1zM103 807h1v1h-1zM104 728h1v1h-1zM117 787h1v1h-1zM160 746h1v1h-1zM636 682h1v1h-1zM63 809h1v1h-1zM121 812h1v1h-1zM114 761h1v1h-1zM245 740h1v1h-1zM60 780h1v1h-1zM237 727h1v1h-1zM113 771h1v1h-1zM155 766h1v1h-1zM439 717h1v1h-1zM121 775h1v1h-1zM320 724h1v1h-1zM213 771h1v1h-1zM218 769h1v1h-1zM459 737h1v1h-1zM112 795h1v1h-1zM573 687h1v1h-1zM535 736h1v1h-1zM351 757h1v1h-1zM72 767h1v1h-1zM348 747h1v1h-1zM311 759h1v1h-1zM423 736h1v1h-1zM132 772h1v1h-1zM620 681h1v1h-1zM526 671h1v1h-1zM95 730h1v1h-1zM173 766h1v1h-1zM66 774h1v1h-1zM471 716h1v1h-1zM561 720h1v1h-1zM713 662h1v1h-1zM317 775h1v1h-1zM350 748h1v1h-1zM357 707h1v1h-1zM294 728h1v1h-1zM618 706h1v1h-1zM315 701h1v1h-1zM182 764h1v1h-1zM264 737h1v1h-1zM61 812h1v1h-1zM388 691h1v1h-1zM367 760h1v1h-1zM220 758h1v1h-1zM490 677h1v1h-1zM410 684h1v1h-1zM183 725h1v1h-1zM82 730h1v1h-1zM101 794h1v1h-1zM121 811h1v1h-1zM169 753h1v1h-1zM232 774h1v1h-1zM579 664h1v1h-1zM158 800h1v1h-1zM541 722h1v1h-1zM359 755h1v1h-1zM492 758h1v1h-1zM212 742h1v1h-1zM56 832h1v1h-1zM434 682h1v1h-1zM145 750h1v1h-1zM105 788h1v1h-1zM444 691h1v1h-1zM363 702h1v1h-1zM132 778h1v1h-1zM154 719h1v1h-1zM596 662h1v1h-1zM154 745h1v1h-1zM373 741h1v1h-1zM100 727h1v1h-1zM457 679h1v1h-1zM96 789h1v1h-1zM266 773h1v1h-1zM67 739h1v1h-1zM283 723h1v1h-1zM486 727h1v1h-1zM84 769h1v1h-1zM156 781h1v1h-1zM417 683h1v1h-1zM315 756h1v1h-1zM172 786h1v1h-1zM327 759h1v1h-1zM236 773h1v1h-1zM501 675h1v1h-1zM164 779h1v1h-1zM412 733h1v1h-1zM331 678h1v1h-1zM399 776h1v1h-1zM201 759h1v1h-1zM388 689h1v1h-1zM370 753h1v1h-1zM205 717h1v1h-1zM64 740h1v1h-1zM638 725h1v1h-1zM381 713h1v1h-1zM129 767h1v1h-1zM392 709h1v1h-1zM158 771h1v1h-1zM243 760h1v1h-1zM499 729h1v1h-1zM233 761h1v1h-1zM162 795h1v1h-1zM169 716h1v1h-1zM81 733h1v1h-1zM135 786h1v1h-1zM155 743h1v1h-1zM117 773h1v1h-1zM76 800h1v1h-1zM241 756h1v1h-1zM133 726h1v1h-1zM398 729h1v1h-1zM571 697h1v1h-1zM156 715h1v1h-1zM295 752h1v1h-1zM261 712h1v1h-1zM81 815h1v1h-1zM99 751h1v1h-1zM525 689h1v1h-1zM245 713h1v1h-1zM448 673h1v1h-1zM78 740h1v1h-1zM308 689h1v1h-1zM504 722h1v1h-1zM506 706h1v1h-1zM56 804h1v1h-1zM269 773h1v1h-1zM197 748h1v1h-1zM413 697h1v1h-1zM80 751h1v1h-1zM153 808h1v1h-1zM455 673h1v1h-1zM243 762h1v1h-1zM235 763h1v1h-1zM650 659h1v1h-1zM175 725h1v1h-1zM69 753h1v1h-1zM207 766h1v1h-1zM109 784h1v1h-1zM83 735h1v1h-1zM293 755h1v1h-1zM620 674h1v1h-1zM299 717h1v1h-1zM338 729h1v1h-1zM177 722h1v1h-1zM295 745h1v1h-1zM408 711h1v1h-1zM305 724h1v1h-1zM447 736h1v1h-1zM284 733h1v1h-1zM126 754h1v1h-1zM301 732h1v1h-1zM253 761h1v1h-1zM114 718h1v1h-1zM322 692h1v1h-1zM459 747h1v1h-1zM103 728h1v1h-1zM281 730h1v1h-1zM394 745h1v1h-1zM212 731h1v1h-1zM155 760h1v1h-1zM198 731h1v1h-1zM279 707h1v1h-1zM363 722h1v1h-1zM288 780h1v1h-1zM92 747h1v1h-1zM460 688h1v1h-1zM573 667h1v1h-1zM90 803h1v1h-1zM146 734h1v1h-1zM117 734h1v1h-1zM488 731h1v1h-1zM555 721h1v1h-1zM70 801h1v1h-1zM181 795h1v1h-1zM124 792h1v1h-1zM243 759h1v1h-1zM570 727h1v1h-1zM79 744h1v1h-1zM116 787h1v1h-1zM251 739h1v1h-1zM270 761h1v1h-1zM403 740h1v1h-1zM228 729h1v1h-1zM105 773h1v1h-1zM190 747h1v1h-1zM686 701h1v1h-1zM407 719h1v1h-1zM96 720h1v1h-1zM451 738h1v1h-1zM172 765h1v1h-1zM430 702h1v1h-1zM59 815h1v1h-1zM510 669h1v1h-1zM113 775h1v1h-1zM236 759h1v1h-1zM347 713h1v1h-1zM262 723h1v1h-1zM114 759h1v1h-1zM104 730h1v1h-1zM161 791h1v1h-1zM73 768h1v1h-1zM133 742h1v1h-1zM101 724h1v1h-1zM240 733h1v1h-1zM191 739h1v1h-1zM303 752h1v1h-1zM159 762h1v1h-1zM66 765h1v1h-1zM180 729h1v1h-1zM410 697h1v1h-1zM149 741h1v1h-1zM212 718h1v1h-1zM410 757h1v1h-1zM213 719h1v1h-1zM528 722h1v1h-1zM565 676h1v1h-1zM171 761h1v1h-1zM396 725h1v1h-1zM148 733h1v1h-1zM104 810h1v1h-1zM228 752h1v1h-1zM312 742h1v1h-1zM590 670h1v1h-1zM107 793h1v1h-1zM380 696h1v1h-1zM246 763h1v1h-1zM101 785h1v1h-1zM660 688h1v1h-1zM369 714h1v1h-1zM100 737h1v1h-1zM549 677h1v1h-1zM91 797h1v1h-1zM87 749h1v1h-1zM180 750h1v1h-1zM594 696h1v1h-1zM66 748h1v1h-1zM566 678h1v1h-1zM317 728h1v1h-1zM78 737h1v1h-1zM293 763h1v1h-1zM238 771h1v1h-1zM291 714h1v1h-1zM397 736h1v1h-1zM358 725h1v1h-1zM755 678h1v1h-1zM111 791h1v1h-1zM455 708h1v1h-1zM215 729h1v1h-1zM431 742h1v1h-1zM533 728h1v1h-1zM723 669h1v1h-1zM153 711h1v1h-1zM235 718h1v1h-1zM602 683h1v1h-1zM607 702h1v1h-1zM198 755h1v1h-1zM598 718h1v1h-1zM213 745h1v1h-1zM199 766h1v1h-1zM411 744h1v1h-1zM244 752h1v1h-1zM233 779h1v1h-1zM204 744h1v1h-1zM225 726h1v1h-1zM104 761h1v1h-1zM76 730h1v1h-1zM409 689h1v1h-1zM291 730h1v1h-1zM353 699h1v1h-1zM447 725h1v1h-1zM139 738h1v1h-1zM140 781h1v1h-1zM158 751h1v1h-1zM169 716h1v1h-1zM414 700h1v1h-1zM199 751h1v1h-1zM177 713h1v1h-1zM332 740h1v1h-1zM122 733h1v1h-1zM92 822h1v1h-1zM370 764h1v1h-1zM411 746h1v1h-1zM166 778h1v1h-1zM331 684h1v1h-1zM66 832h1v1h-1zM212 754h1v1h-1zM298 731h1v1h-1zM148 739h1v1h-1zM187 746h1v1h-1zM316 742h1v1h-1zM305 759h1v1h-1zM110 731h1v1h-1zM376 755h1v1h-1zM82 823h1v1h-1zM653 706h1v1h-1zM128 763h1v1h-1zM148 718h1v1h-1zM127 739h1v1h-1zM720 671h1v1h-1zM162 757h1v1h-1zM314 726h1v1h-1zM717 682h1v1h-1zM614 699h1v1h-1zM69 812h1v1h-1zM268 763h1v1h-1zM311 714h1v1h-1zM373 715h1v1h-1zM182 729h1v1h-1zM179 796h1v1h-1zM56 740h1v1h-1zM67 775h1v1h-1zM283 703h1v1h-1zM81 767h1v1h-1zM128 769h1v1h-1zM181 732h1v1h-1zM79 757h1v1h-1zM65 754h1v1h-1zM578 725h1v1h-1zM226 738h1v1h-1zM129 781h1v1h-1zM377 765h1v1h-1zM58 807h1v1h-1zM145 762h1v1h-1zM634 696h1v1h-1zM540 688h1v1h-1zM331 762h1v1h-1zM87 815h1v1h-1zM175 715h1v1h-1zM64 803h1v1h-1zM134 769h1v1h-1zM63 805h1v1h-1zM99 797h1v1h-1zM330 740h1v1h-1zM90 737h1v1h-1zM110 807h1v1h-1zM546 675h1v1h-1zM182 713h1v1h-1zM181 751h1v1h-1zM85 783h1v1h-1zM441 731h1v1h-1zM356 753h1v1h-1zM282 749h1v1h-1zM321 706h1v1h-1zM90 829h1v1h-1zM151 741h1v1h-1zM302 717h1v1h-1zM618 728h1v1h-1zM459 736h1v1h-1zM334 712h1v1h-1zM267 721h1v1h-1zM60 788h1v1h-1zM532 671h1v1h-1zM78 806h1v1h-1zM100 778h1v1h-1zM367 757h1v1h-1zM455 709h1v1h-1zM434 745h1v1h-1zM235 765h1v1h-1zM118 745h1v1h-1zM67 764h1v1h-1zM490 699h1v1h-1zM673 672h1v1h-1zM144 754h1v1h-1zM505 733h1v1h-1zM211 731h1v1h-1zM172 790h1v1h-1zM260 750h1v1h-1zM57 779h1v1h-1zM230 773h1v1h-1zM127 804h1v1h-1zM380 721h1v1h-1zM259 723h1v1h-1zM508 721h1v1h-1zM538 706h1v1h-1zM174 782h1v1h-1zM159 748h1v1h-1zM596 686h1v1h-1zM260 702h1v1h-1zM88 816h1v1h-1zM70 732h1v1h-1zM716 644h1v1h-1zM299 742h1v1h-1zM73 756h1v1h-1zM263 712h1v1h-1zM260 714h1v1h-1zM227 764h1v1h-1zM616 686h1v1h-1zM612 670h1v1h-1zM99 817h1v1h-1zM109 764h1v1h-1zM214 786h1v1h-1zM474 684h1v1h-1zM324 699h1v1h-1zM392 744h1v1h-1zM297 721h1v1h-1zM131 741h1v1h-1zM460 738h1v1h-1zM59 772h1v1h-1zM370 708h1v1h-1zM125 782h1v1h-1zM244 734h1v1h-1zM666 650h1v1h-1zM278 726h1v1h-1zM74 767h1v1h-1zM223 776h1v1h-1zM346 757h1v1h-1zM74 737h1v1h-1zM148 730h1v1h-1zM61 739h1v1h-1zM278 733h1v1h-1zM202 749h1v1h-1zM260 741h1v1h-1zM165 744h1v1h-1zM344 743h1v1h-1zM117 766h1v1h-1zM551 716h1v1h-1zM633 680h1v1h-1zM254 761h1v1h-1zM241 781h1v1h-1zM498 744h1v1h-1zM163 779h1v1h-1zM447 692h1v1h-1zM162 747h1v1h-1zM385 711h1v1h-1zM181 760h1v1h-1zM312 760h1v1h-1zM576 694h1v1h-1zM73 737h1v1h-1zM451 721h1v1h-1zM279 732h1v1h-1zM201 766h1v1h-1zM188 783h1v1h-1zM79 771h1v1h-1zM150 762h1v1h-1zM324 741h1v1h-1zM89 797h1v1h-1zM352 711h1v1h-1zM637 712h1v1h-1zM682 690h1v1h-1zM530 725h1v1h-1zM450 689h1v1h-1zM119 773h1v1h-1zM654 695h1v1h-1zM128 719h1v1h-1zM508 692h1v1h-1zM517 679h1v1h-1zM323 742h1v1h-1zM268 716h1v1h-1zM127 772h1v1h-1zM268 706h1v1h-1zM163 729h1v1h-1zM99 763h1v1h-1zM100 736h1v1h-1zM446 712h1v1h-1zM571 682h1v1h-1zM105 808h1v1h-1zM59 718h1v1h-1zM152 736h1v1h-1zM102 809h1v1h-1zM123 784h1v1h-1zM301 721h1v1h-1zM220 724h1v1h-1zM224 785h1v1h-1zM129 726h1v1h-1zM349 738h1v1h-1zM163 715h1v1h-1zM210 720h1v1h-1zM240 754h1v1h-1zM548 708h1v1h-1zM145 803h1v1h-1zM384 749h1v1h-1zM171 746h1v1h-1zM536 677h1v1h-1zM208 721h1v1h-1zM260 760h1v1h-1zM517 680h1v1h-1zM354 748h1v1h-1zM88 735h1v1h-1zM103 722h1v1h-1zM717 700h1v1h-1zM65 738h1v1h-1zM167 746h1v1h-1zM630 678h1v1h-1zM60 746h1v1h-1zM112 756h1v1h-1zM132 763h1v1h-1zM85 783h1v1h-1zM244 717h1v1h-1zM306 714h1v1h-1zM175 790h1v1h-1zM93 751h1v1h-1zM454 729h1v1h-1zM448 738h1v1h-1zM290 765h1v1h-1zM103 765h1v1h-1zM279 746h1v1h-1zM328 758h1v1h-1zM223 784h1v1h-1zM503 721h1v1h-1zM206 732h1v1h-1zM263 781h1v1h-1zM95 770h1v1h-1zM291 718h1v1h-1zM418 764h1v1h-1zM393 739h1v1h-1zM149 725h1v1h-1zM722 647h1v1h-1zM385 698h1v1h-1zM221 776h1v1h-1zM217 721h1v1h-1zM428 724h1v1h-1zM118 800h1v1h-1zM334 733h1v1h-1zM384 690h1v1h-1zM266 711h1v1h-1zM512 708h1v1h-1zM242 779h1v1h-1zM241 711h1v1h-1zM161 717h1v1h-1zM567 705h1v1h-1zM174 785h1v1h-1zM368 729h1v1h-1zM215 732h1v1h-1zM590 703h1v1h-1zM610 712h1v1h-1zM65 800h1v1h-1zM736 692h1v1h-1zM313 780h1v1h-1zM80 788h1v1h-1zM256 706h1v1h-1zM72 825h1v1h-1zM283 713h1v1h-1zM121 739h1v1h-1zM196 763h1v1h-1zM169 736h1v1h-1zM312 762h1v1h-1zM464 701h1v1h-1zM592 676h1v1h-1zM179 742h1v1h-1zM294 737h1v1h-1zM57 727h1v1h-1zM198 707h1v1h-1zM634 692h1v1h-1zM97 753h1v1h-1zM509 719h1v1h-1zM341 694h1v1h-1zM165 753h1v1h-1zM427 685h1v1h-1zM163 777h1v1h-1zM536 665h1v1h-1zM83 805h1v1h-1zM97 762h1v1h-1zM406 749h1v1h-1zM233 768h1v1h-1zM107 750h1v1h-1zM264 775h1v1h-1zM166 767h1v1h-1zM283 764h1v1h-1zM401 694h1v1h-1zM496 744h1v1h-1zM75 782h1v1h-1zM306 694h1v1h-1zM691 675h1v1h-1zM238 726h1v1h-1zM421 683h1v1h-1zM89 812h1v1h-1zM513 691h1v1h-1zM301 715h1v1h-1zM529 687h1v1h-1zM434 700h1v1h-1zM508 744h1v1h-1zM74 812h1v1h-1zM382 707h1v1h-1zM126 753h1v1h-1zM153 781h1v1h-1zM177 791h1v1h-1zM306 732h1v1h-1zM327 759h1v1h-1zM584 684h1v1h-1zM59 789h1v1h-1zM125 739h1v1h-1zM193 784h1v1h-1zM460 713h1v1h-1zM283 764h1v1h-1zM264 730h1v1h-1zM414 713h1v1h-1zM343 760h1v1h-1zM163 711h1v1h-1zM85 766h1v1h-1zM239 763h1v1h-1zM520 689h1v1h-1zM310 734h1v1h-1zM73 738h1v1h-1zM229 762h1v1h-1z"/>
<path fill="#ff0000" d="M309 726h1v1h-1zM473 706h1v1h-1zM164 734h1v1h-1zM168 727h1v1h-1zM108 769h1v1h-1zM312 697h1v1h-1zM422 706h1v1h-1zM99 727h1v1h-1zM276 776h1v1h-1zM278 783h1v1h-1zM92 750h1v1h-1zM273 745h1v1h-1zM155 731h1v1h-1zM127 763h1v1h-1zM697 673h1v1h-1zM86 796h1v1h-1zM185 736h1v1h-1zM321 714h1v1h-1zM213 714h1v1h-1zM61 790h1v1h-1zM505 708h1v1h-1zM142 766h1v1h-1zM216 759h1v1h-1zM553 709h1v1h-1zM653 661h1v1h-1zM561 675h1v1h-1zM215 770h1v1h-1zM402 698h1v1h-1zM488 684h1v1h-1zM126 784h1v1h-1zM653 666h1v1h-1zM90 742h1v1h-1zM345 694h1v1h-1zM142 796h1v1h-1zM133 727h1v1h-1zM103 725h1v1h-1zM601 715h1v1h-1zM100 752h1v1h-1zM558 727h1v1h-1zM114 761h1v1h-1zM179 750h1v1h-1zM131 730h1v1h-1zM706 653h1v1h-1zM87 791h1v1h-1zM500 734h1v1h-1zM167 733h1v1h-1zM618 736h1v1h-1zM406 744h1v1h-1zM152 786h1v1h-1zM263 723h1v1h-1zM112 782h1v1h-1zM214 723h1v1h-1zM64 755h1v1h-1zM360 703h1v1h-1zM307 712h1v1h-1zM155 739h1v1h-1zM59 801h1v1h-1zM596 708h1v1h-1zM99 765h1v1h-1zM179 758h1v1h-1zM63 745h1v1h-1zM203 730h1v1h-1zM211 762h1v1h-1zM275 771h1v1h-1zM177 732h1v1h-1zM147 747h1v1h-1zM433 743h1v1h-1zM158 799h1v1h-1zM181 797h1v1h-1zM253 758h1v1h-1zM156 783h1v1h-1zM389 749h1v1h-1zM84 812h1v1h-1zM177 777h1v1h-1zM220 755h1v1h-1zM150 792h1v1h-1zM479 730h1v1h-1zM190 754h1v1h-1zM220 715h1v1h-1zM242 712h1v1h-1zM471 718h1v1h-1zM134 799h1v1h-1zM469 715h1v1h-1zM611 681h1v1h-1zM153 770h1v1h-1zM115 763h1v1h-1zM436 699h1v1h-1zM172 742h1v1h-1zM138 737h1v1h-1zM82 826h1v1h-1zM319 747h1v1h-1zM592 741h1v1h-1zM521 702h1v1h-1zM304 725h1v1h-1zM228 759h1v1h-1zM669 713h1v1h-1zM346 730h1v1h-1zM625 722h1v1h-1zM364 758h1v1h-1zM369 740h1v1h-1zM372 691h1v1h-1zM99 796h1v1h-1zM148 742h1v1h-1zM77 787h1v1h-1zM586 701h1v1h-1zM736 708h1v1h-1zM314 758h1v1h-1zM110 747h1v1h-1zM99 780h1v1h-1zM232 773h1v1h-1zM206 710h1v1h-1zM125 722h1v1h-1zM86 795h1v1h-1zM338 734h1v1h-1zM438 717h1v1h-1zM76 799h1v1h-1zM171 768h1v1h-1zM167 772h1v1h-1zM279 713h1v1h-1zM313 772h1v1h-1zM215 703h1v1h-1zM505 726h1v1h-1zM206 762h1v1h-1zM168 792h1v1h-1zM418 688h1v1h-1zM481 688h1v1h-1zM517 735h1v1h-1zM115 768h1v1h-1zM126 776h1v1h-1zM239 740h1v1h-1zM648 713h1v1h-1zM322 700h1v1h-1zM324 758h1v1h-1zM178 728h1v1h-1zM716 693h1v1h-1zM120 763h1v1h-1zM288 742h1v1h-1zM355 739h1v1h-1zM453 719h1v1h-1zM456 707h1v1h-1zM204 798h1v1h-1zM155 810h1v1h-1zM679 651h1v1h-1zM285 756h1v1h-1zM160 773h1v1h-1zM104 800h1v1h-1zM447 691h1v1h-1zM488 674h1v1h-1zM294 749h1v1h-1zM203 755h1v1h-1zM346 738h1v1h-1zM680 725h1v1h-1zM299 761h1v1h-1zM434 750h1v1h-1zM522 714h1v1h-1zM411 681h1v1h-1zM251 777h1v1h-1zM119 757h1v1h-1zM369 749h1v1h-1zM472 752h1v1h-1zM638 671h1v1h-1zM109 799h1v1h-1zM95 809h1v1h-1zM332 706h1v1h-1zM468 727h1v1h-1zM81 802h1v1h-1zM319 706h1v1h-1zM153 784h1v1h-1zM777 647h1v1h-1zM193 763h1v1h-1zM83 757h1v1h-1zM431 730h1v1h-1zM167 767h1v1h-1zM219 704h1v1h-1zM101 732h1v1h-1zM180 772h1v1h-1zM102 738h1v1h-1zM150 789h1v1h-1zM299 741h1v1h-1zM167 790h1v1h-1zM351 722h1v1h-1zM544 679h1v1h-1zM298 714h1v1h-1zM64 746h1v1h-1zM632 700h1v1h-1zM126 789h1v1h-1zM187 792h1v1h-1zM271 748h1v1h-1zM321 695h1v1h-1zM185 754h1v1h-1zM229 741h1v1h-1zM326 701h1v1h-1zM237 718h1v1h-1zM160 742h1v1h-1zM215 739h1v1h-1zM203 766h1v1h-1zM164 726h1v1h-1zM311 733h1v1h-1zM264 718h1v1h-1zM216 764h1v1h-1zM378 683h1v1h-1zM455 741h1v1h-1zM339 703h1v1h-1zM184 720h1v1h-1zM592 724h1v1h-1zM91 738h1v1h-1zM449 707h1v1h-1zM220 741h1v1h-1zM209 776h1v1h-1zM483 720h1v1h-1zM343 751h1v1h-1zM663 694h1v1h-1zM518 692h1v1h-1zM96 744h1v1h-1zM259 728h1v1h-1zM419 731h1v1h-1zM83 799h1v1h-1zM279 730h1v1h-1zM727 659h1v1h-1zM142 779h1v1h-1zM96 790h1v1h-1zM163 776h1v1h-1zM186 706h1v1h-1zM161 804h1v1h-1zM225 706h1v1h-1zM474 681h1v1h-1zM266 748h1v1h-1zM305 706h1v1h-1zM93 780h1v1h-1zM77 764h1v1h-1zM616 697h1v1h-1zM187 722h1v1h-1zM609 706h1v1h-1zM182 736h1v1h-1zM334 711h1v1h-1zM347 743h1v1h-1zM86 726h1v1h-1zM79 808h1v1h-1zM230 713h1v1h-1zM100 725h1v1h-1zM165 730h1v1h-1zM125 763h1v1h-1zM172 754h1v1h-1zM236 715h1v1h-1zM172 761h1v1h-1zM182 715h1v1h-1zM251 715h1v1h-1zM360 688h1v1h-1zM69 778h1v1h-1zM757 668h1v1h-1zM224 787h1v1h-1zM572 731h1v1h-1zM57 830h1v1h-1zM74 752h1v1h-1zM89 777h1v1h-1zM558 668h1v1h-1zM216 775h1v1h-1zM486 736h1v1h-1zM368 708h1v1h-1zM85 783h1v1h-1zM193 777h1v1h-1zM180 724h1v1h-1zM235 755h1v1h-1zM409 688h1v1h-1zM84 797h1v1h-1zM577 672h1v1h-1zM246 747h1v1h-1zM195 723h1v1h-1zM370 742h1v1h-1zM157 720h1v1h-1zM380 738h1v1h-1zM218 759h1v1h-1zM247 733h1v1h-1zM123 772h1v1h-1zM128 744h1v1h-1zM500 699h1v1h-1zM298 756h1v1h-1zM220 789h1v1h-1zM425 704h1v1h-1zM557 699h1v1h-1zM111 773h1v1h-1zM762 668h1v1h-1zM59 731h1v1h-1zM319 747h1v1h-1zM152 711h1v1h-1zM148 792h1v1h-1zM255 723h1v1h-1zM313 698h1v1h-1zM227 767h1v1h-1zM381 700h1v1h-1zM614 710h1v1h-1zM115 811h1v1h-1zM142 768h1v1h-1zM316 710h1v1h-1zM215 778h1v1h-1zM173 718h1v1h-1zM260 783h1v1h-1zM369 746h1v1h-1zM553 724h1v1h-1zM599 701h1v1h-1zM461 733h1v1h-1zM187 795h1v1h-1zM524 729h1v1h-1zM378 754h1v1h-1zM117 754h1v1h-1zM620 714h1v1h-1zM146 747h1v1h-1zM360 734h1v1h-1zM368 739h1v1h-1zM552 726h1v1h-1zM350 752h1v1h-1zM689 644h1v1h-1zM75 776h1v1h-1zM67 801h1v1h-1zM125 796h1v1h-1zM297 710h1v1h-1zM221 732h1v1h-1zM83 757h1v1h-1zM128 742h1v1h-1zM299 746h1v1h-1zM211 730h1v1h-1zM416 754h1v1h-1zM242 732h1v1h-1zM517 720h1v1h-1zM412 699h1v1h-1zM255 761h1v1h-1zM192 758h1v1h-1zM132 767h1v1h-1zM164 718h1v1h-1zM190 760h1v1h-1zM193 768h1v1h-1zM119 803h1v1h-1zM245 740h1v1h-1zM94 729h1v1h-1zM508 745h1v1h-1zM284 760h1v1h-1zM88 808h1v1h-1zM179 710h1v1h-1zM149 788h1v1h-1zM110 806h1v1h-1zM248 728h1v1h-1zM121 705h1v1h-1zM109 749h1v1h-1zM373 757h1v1h-1zM224 762h1v1h-1zM353 719h1v1h-1zM243 709h1v1h-1zM260 716h1v1h-1zM172 794h1v1h-1zM222 751h1v1h-1zM248 720h1v1h-1zM185 761h1v1h-1zM467 694h1v1h-1zM145 714h1v1h-1zM135 722h1v1h-1zM186 726h1v1h-1zM433 710h1v1h-1zM487 714h1v1h-1zM291 761h1v1h-1zM193 779h1v1h-1zM339 722h1v1h-1zM467 700h1v1h-1zM144 733h1v1h-1zM351 695h1v1h-1zM378 743h1v1h-1zM206 762h1v1h-1zM106 794h1v1h-1zM315 727h1v1h-1zM131 722h1v1h-1zM196 727h1v1h-1zM281 742h1v1h-1zM638 718h1v1h-1zM107 733h1v1h-1zM80 744h1v1h-1zM278 710h1v1h-1zM602 719h1v1h-1zM70 781h1v1h-1zM335 724h1v1h-1zM64 727h1v1h-1zM284 757h1v1h-1zM97 784h1v1h-1zM345 758h1v1h-1zM193 792h1v1h-1zM343 750h1v1h-1zM150 733h1v1h-1zM81 750h1v1h-1zM120 764h1v1h-1zM156 766h1v1h-1zM114 799h1v1h-1zM126 743h1v1h-1zM280 738h1v1h-1zM228 770h1v1h-1zM466 700h1v1h-1zM257 703h1v1h-1zM278 765h1v1h-1zM378 686h1v1h-1zM492 738h1v1h-1zM302 749h1v1h-1zM67 736h1v1h-1zM238 701h1v1h-1zM66 805h1v1h-1zM313 717h1v1h-1zM77 769h1v1h-1zM278 745h1v1h-1zM108 733h1v1h-1zM494 702h1v1h-1zM88 805h1v1h-1zM346 728h1v1h-1zM374 718h1v1h-1zM157 762h1v1h-1zM307 733h1v1h-1zM180 739h1v1h-1zM150 795h1v1h-1zM151 805h1v1h-1zM60 822h1v1h-1zM354 720h1v1h-1zM80 783h1v1h-1zM126 737h1v1h-1zM85 722h1v1h-1zM448 738h1v1h-1zM273 743h1v1h-1zM242 746h1v1h-1zM301 750h1v1h-1zM452 689h1v1h-1zM324 726h1v1h-1zM264 754h1v1h-1zM173 752h1v1h-1zM266 745h1v1h-1zM703 678h1v1h-1zM294 771h1v1h-1zM246 737h1v1h-1zM529 707h1v1h-1zM73 764h1v1h-1zM77 764h1v1h-1zM436 713h1v1h-1zM601 686h1v1h-1zM72 815h1v1h-1zM63 751h1v1h-1zM58 770h1v1h-1zM298 713h1v1h-1zM104 785h1v1h-1zM289 759h1v1h-1zM348 690h1v1h-1zM60 748h1v1h-1zM509 670h1v1h-1zM148 758h1v1h-1zM286 708h1v1h-1zM190 729h1v1h-1zM185 749h1v1h-1zM212 705h1v1h-1zM56 753h1v1h-1zM223 775h1v1h-1zM153 793h1v1h-1zM191 761h1v1h-1zM113 767h1v1h-1zM182 743h1v1h-1zM371 715h1v1h-1zM691 654h1v1h-1zM126 743h1v1h-1zM506 727h1v1h-1zM319 753h1v1h-1zM90 729h1v1h-1zM60 749h1v1h-1zM524 733h1v1h-1zM140 749h1v1h-1zM92 802h1v1h-1zM343 729h1v1h-1zM376 680h1v1h-1zM537 732h1v1h-1zM258 703h1v1h-1zM172 762h1v1h-1zM175 708h1v1h-1zM129 729h1v1h-1zM331 765h1v1h-1zM601 688h1v1h-1zM84 734h1v1h-1zM204 776h1v1h-1zM189 744h1v1h-1zM83 793h1v1h-1zM308 766h1v1h-1zM689 690h1v1h-1zM157 779h1v1h-1zM390 685h1v1h-1zM543 721h1v1h-1zM155 764h1v1h-1zM567 702h1v1h-1zM405 708h1v1h-1zM337 693h1v1h-1zM125 749h1v1h-1zM158 721h1v1h-1zM90 800h1v1h-1zM537 689h1v1h-1zM452 740h1v1h-1zM85 745h1v1h-1zM273 727h1v1h-1zM132 794h1v1h-1zM418 694h1v1h-1zM296 729h1v1h-1zM606 688h1v1h-1zM390 755h1v1h-1zM90 725h1v1h-1zM198 748h1v1h-1zM298 717h1v1h-1zM557 735h1v1h-1zM197 739h1v1h-1zM122 775h1v1h-1zM160 761h1v1h-1zM146 753h1v1h-1zM110 743h1v1h-1zM186 718h1v1h-1zM146 792h1v1h-1zM263 706h1v1h-1zM536 727h1v1h-1zM622 730h1v1h-1zM112 786h1v1h-1zM294 752h1v1h-1zM355 706h1v1h-1zM109 754h1v1h-1zM274 762h1v1h-1zM127 739h1v1h-1zM194 714h1v1h-1zM177 737h1v1h-1zM457 708h1v1h-1zM140 728h1v1h-1zM278 749h1v1h-1zM303 698h1v1h-1zM180 793h1v1h-1zM581 734h1v1h-1zM181 734h1v1h-1zM178 779h1v1h-1zM367 744h1v1h-1zM252 731h1v1h-1zM388 753h1v1h-1zM109 780h1v1h-1zM107 786h1v1h-1zM396 761h1v1h-1zM205 739h1v1h-1zM496 703h1v1h-1zM140 796h1v1h-1zM143 731h1v1h-1zM502 719h1v1h-1zM193 789h1v1h-1zM93 720h1v1h-1zM135 781h1v1h-1zM421 742h1v1h-1zM153 772h1v1h-1zM286 767h1v1h-1zM475 753h1v1h-1zM317 752h1v1h-1zM408 740h1v1h-1zM671 712h1v1h-1zM167 743h1v1h-1zM516 726h1v1h-1zM284 774h1v1h-1zM128 794h1v1h-1zM101 791h1v1h-1zM179 777h1v1h-1zM103 764h1v1h-1zM422 679h1v1h-1zM287 712h1v1h-1zM70 782h1v1h-1zM518 680h1v1h-1zM308 708h1v1h-1zM230 746h1v1h-1zM105 738h1v1h-1zM243 761h1v1h-1zM564 686h1v1h-1zM302 728h1v1h-1zM238 730h1v1h-1zM315 712h1v1h-1zM284 774h1v1h-1zM324 694h1v1h-1zM127 810h1v1h-1zM108 783h1v1h-1zM59 773h1v1h-1zM472 692h1v1h-1zM56 821h1v1h-1zM149 746h1v1h-1zM302 741h1v1h-1zM258 776h1v1h-1zM544 714h1v1h-1zM132 750h1v1h-1zM95 812h1v1h-1zM112 733h1v1h-1zM257 773h1v1h-1zM163 776h1v1h-1zM236 761h1v1h-1zM364 772h1v1h-1zM176 724h1v1h-1zM349 690h1v1h-1zM61 749h1v1h-1zM281 764h1v1h-1zM551 674h1v1h-1zM588 712h1v1h-1zM295 759h1v1h-1zM689 662h1v1h-1zM141 793h1v1h-1zM166 802h1v1h-1zM233 703h1v1h-1zM262 744h1v1h-1zM461 697h1v1h-1zM232 735h1v1h-1zM71 821h1v1h-1zM371 729h1v1h-1zM136 801h1v1h-1zM522 735h1v1h-1zM132 818h1v1h-1zM165 767h1v1h-1zM103 786h1v1h-1zM168 770h1v1h-1zM311 698h1v1h-1zM154 722h1v1h-1zM71 759h1v1h-1zM303 749h1v1h-1zM395 705h1v1h-1zM93 750h1v1h-1zM221 745h1v1h-1zM78 799h1v1h-1zM60 806h1v1h-1zM199 762h1v1h-1zM161 782h1v1h-1zM515 674h1v1h-1zM59 780h1v1h-1zM338 723h1v1h-1zM394 696h1v1h-1zM218 742h1v1h-1zM258 768h1v1h-1zM146 777h1v1h-1zM148 723h1v1h-1zM73 824h1v1h-1zM549 722h1v1h-1zM64 772h1v1h-1zM103 752h1v1h-1zM388 699h1v1h-1zM237 736h1v1h-1zM264 730h1v1h-1zM165 776h1v1h-1zM112 806h1v1h-1zM444 712h1v1h-1zM98 810h1v1h-1zM165 735h1v1h-1zM407 756h1v1h-1zM166 808h1v1h-1zM616 653h1v1h-1zM118 797h1v1h-1zM272 728h1v1h-1zM277 762h1v1h-1zM258 702h1v1h-1zM424 753h1v1h-1zM70 757h1v1h-1zM281 710h1v1h-1zM436 734h1v1h-1zM72 829h1v1h-1zM281 762h1v1h-1zM229 792h1v1h-1zM212 727h1v1h-1zM277 734h1v1h-1zM325 699h1v1h-1zM374 721h1v1h-1zM540 697h1v1h-1zM344 756h1v1h-1zM773 702h1v1h-1zM349 691h1v1h-1zM154 722h1v1h-1zM107 778h1v1h-1zM79 740h1v1h-1zM154 747h1v1h-1zM97 790h1v1h-1zM361 755h1v1h-1zM365 705h1v1h-1zM318 696h1v1h-1zM203 710h1v1h-1zM240 761h1v1h-1zM150 805h1v1h-1zM566 718h1v1h-1zM60 819h1v1h-1zM176 710h1v1h-1zM296 745h1v1h-1zM120 737h1v1h-1zM493 727h1v1h-1zM248 716h1v1h-1zM197 765h1v1h-1zM76 746h1v1h-1zM159 755h1v1h-1zM305 723h1v1h-1zM159 808h1v1h-1zM70 813h1v1h-1zM299 752h1v1h-1zM169 735h1v1h-1zM486 666h1v1h-1zM366 709h1v1h-1zM386 718h1v1h-1zM531 733h1v1h-1zM453 687h1v1h-1zM179 732h1v1h-1zM294 736h1v1h-1zM150 738h1v1h-1zM128 792h1v1h-1zM129 759h1v1h-1zM94 745h1v1h-1zM142 749h1v1h-1zM137 806h1v1h-1zM354 709h1v1h-1zM147 722h1v1h-1zM71 756h1v1h-1zM220 772h1v1h-1zM127 714h1v1h-1zM364 762h1v1h-1zM135 789h1v1h-1zM287 704h1v1h-1zM118 761h1v1h-1zM249 758h1v1h-1zM506 687h1v1h-1zM168 749h1v1h-1zM272 776h1v1h-1zM228 771h1v1h-1zM79 752h1v1h-1zM62 743h1v1h-1zM482 751h1v1h-1zM184 741h1v1h-1zM362 701h1v1h-1zM216 756h1v1h-1zM478 745h1v1h-1zM125 778h1v1h-1zM250 701h1v1h-1zM283 719h1v1h-1zM439 735h1v1h-1zM65 745h1v1h-1zM194 733h1v1h-1zM246 765h1v1h-1zM304 753h1v1h-1zM105 811h1v1h-1zM280 750h1v1h-1zM367 735h1v1h-1zM394 742h1v1h-1zM137 732h1v1h-1zM229 721h1v1h-1zM166 759h1v1h-1zM205 706h1v1h-1zM194 752h1v1h-1zM605 658h1v1h-1zM59 741h1v1h-1zM610 694h1v1h-1zM66 764h1v1h-1zM82 741h1v1h-1zM129 748h1v1h-1zM162 730h1v1h-1zM497 717h1v1h-1zM481 723h1v1h-1zM589 714h1v1h-1zM206 721h1v1h-1zM60 734h1v1h-1zM325 731h1v1h-1zM541 708h1v1h-1zM92 821h1v1h-1zM468 673h1v1h-1zM393 692h1v1h-1zM254 724h1v1h-1zM553 711h1v1h-1zM514 677h1v1h-1zM71 740h1v1h-1zM257 706h1v1h-1zM144 777h1v1h-1zM228 754h1v1h-1zM78 729h1v1h-1zM193 750h1v1h-1zM214 721h1v1h-1zM56 769h1v1h-1zM245 723h1v1h-1zM536 733h1v1h-1zM76 820h1v1h-1zM605 728h1v1h-1zM252 753h1v1h-1zM131 784h1v1h-1zM652 652h1v1h-1zM245 700h1v1h-1zM227 781h1v1h-1zM200 732h1v1h-1zM521 697h1v1h-1zM101 746h1v1h-1zM131 777h1v1h-1zM160 740h1v1h-1zM76 834h1v1h-1zM483 712h1v1h-1zM252 757h1v1h-1zM312 745h1v1h-1zM526 706h1v1h-1zM255 750h1v1h-1zM157 755h1v1h-1zM274 731h1v1h-1zM258 726h1v1h-1zM167 735h1v1h-1zM139 712h1v1h-1zM192 741h1v1h-1zM395 742h1v1h-1zM114 763h1v1h-1zM746 685h1v1h-1zM141 791h1v1h-1zM156 771h1v1h-1zM98 790h1v1h-1zM207 749h1v1h-1zM198 795h1v1h-1zM360 724h1v1h-1zM538 719h1v1h-1zM146 811h1v1h-1zM452 724h1v1h-1zM171 703h1v1h-1zM213 740h1v1h-1zM100 819h1v1h-1zM534 694h1v1h-1zM198 748h1v1h-1zM372 759h1v1h-1zM64 777h1v1h-1zM370 745h1v1h-1zM137 768h1v1h-1zM234 730h1v1h-1zM355 745h1v1h-1zM116 803h1v1h-1zM272 772h1v1h-1zM476 700h1v1h-1zM113 813h1v1h-1zM242 753h1v1h-1zM121 733h1v1h-1zM106 748h1v1h-1zM253 735h1v1h-1zM237 792h1v1h-1zM336 735h1v1h-1zM497 732h1v1h-1zM376 721h1v1h-1zM182 786h1v1h-1zM251 766h1v1h-1zM355 695h1v1h-1zM478 686h1v1h-1zM360 772h1v1h-1zM259 722h1v1h-1zM102 808h1v1h-1zM507 701h1v1h-1zM159 723h1v1h-1zM213 720h1v1h-1zM525 705h1v1h-1zM130 744h1v1h-1zM560 714h1v1h-1zM138 732h1v1h-1zM85 800h1v1h-1zM265 766h1v1h-1zM441 738h1v1h-1zM211 729h1v1h-1zM482 707h1v1h-1zM209 719h1v1h-1zM457 738h1v1h-1zM94 735h1v1h-1zM160 718h1v1h-1zM98 751h1v1h-1zM399 750h1v1h-1zM243 766h1v1h-1zM343 767h1v1h-1zM142 786h1v1h-1zM395 700h1v1h-1zM727 705h1v1h-1zM82 773h1v1h-1zM175 795h1v1h-1zM508 697h1v1h-1zM491 742h1v1h-1zM511 691h1v1h-1zM137 759h1v1h-1zM290 765h1v1h-1zM85 756h1v1h-1zM225 753h1v1h-1zM297 741h1v1h-1zM150 757h1v1h-1zM220 769h1v1h-1zM195 750h1v1h-1zM84 743h1v1h-1zM78 740h1v1h-1zM430 686h1v1h-1zM56 770h1v1h-1zM699 661h1v1h-1zM539 721h1v1h-1zM703 645h1v1h-1zM433 742h1v1h-1zM95 738h1v1h-1zM175 765h1v1h-1zM120 746h1v1h-1zM76 724h1v1h-1zM564 725h1v1h-1zM555 686h1v1h-1zM419 757h1v1h-1zM148 751h1v1h-1zM491 747h1v1h-1zM461 697h1v1h-1zM177 789h1v1h-1zM100 782h1v1h-1zM103 732h1v1h-1zM214 756h1v1h-1zM472 682h1v1h-1zM81 778h1v1h-1zM224 779h1v1h-1zM190 710h1v1h-1zM533 728h1v1h-1zM109 763h1v1h-1zM343 704h1v1h-1zM177 720h1v1h-1zM338 721h1v1h-1zM464 736h1v1h-1zM466 715h1v1h-1zM485 722h1v1h-1zM164 782h1v1h-1zM157 776h1v1h-1zM98 796h1v1h-1zM149 808h1v1h-1zM97 751h1v1h-1zM432 753h1v1h-1zM71 768h1v1h-1zM124 781h1v1h-1zM437 704h1v1h-1zM420 712h1v1h-1zM662 697h1v1h-1zM203 732h1v1h-1zM70 765h1v1h-1zM451 678h1v1h-1zM161 744h1v1h-1zM423 695h1v1h-1zM61 733h1v1h-1zM67 750h1v1h-1zM310 748h1v1h-1zM361 726h1v1h-1zM290 765h1v1h-1zM274 711h1v1h-1zM309 729h1v1h-1zM101 736h1v1h-1zM77 816h1v1h-1zM188 786h1v1h-1zM282 720h1v1h-1zM146 737h1v1h-1zM119 814h1v1h-1zM232 785h1v1h-1zM215 761h1v1h-1zM154 783h1v1h-1zM578 727h1v1h-1zM602 727h1v1h-1zM71 804h1v1h-1zM248 780h1v1h-1zM142 785h1v1h-1zM182 794h1v1h-1zM64 791h1v1h-1zM82 738h1v1h-1zM66 762h1v1h-1zM99 763h1v1h-1zM339 741h1v1h-1zM82 798h1v1h-1zM526 736h1v1h-1zM447 736h1v1h-1zM154 720h1v1h-1zM366 703h1v1h-1zM617 693h1v1h-1zM96 765h1v1h-1zM289 715h1v1h-1zM241 718h1v1h-1zM171 770h1v1h-1zM162 737h1v1h-1zM85 761h1v1h-1zM338 754h1v1h-1zM126 778h1v1h-1zM221 781h1v1h-1zM579 690h1v1h-1zM187 706h1v1h-1zM174 733h1v1h-1zM586 719h1v1h-1zM302 778h1v1h-1zM294 756h1v1h-1zM136 805h1v1h-1zM335 759h1v1h-1zM201 732h1v1h-1zM280 757h1v1h-1zM209 739h1v1h-1zM83 789h1v1h-1zM517 673h1v1h-1zM366 723h1v1h-1zM629 729h1v1h-1zM170 734h1v1h-1zM159 766h1v1h-1zM103 778h1v1h-1zM169 773h1v1h-1zM178 760h1v1h-1zM121 781h1v1h-1zM153 774h1v1h-1zM165 790h1v1h-1zM497 685h1v1h-1zM232 772h1v1h-1zM461 723h1v1h-1zM72 785h1v1h-1zM123 799h1v1h-1zM619 718h1v1h-1zM72 795h1v1h-1zM79 763h1v1h-1zM267 736h1v1h-1zM163 774h1v1h-1zM125 752h1v1h-1zM316 712h1v1h-1zM316 756h1v1h-1zM122 790h1v1h-1zM278 730h1v1h-1zM236 766h1v1h-1zM486 686h1v1h-1zM78 826h1v1h-1zM140 765h1v1h-1zM291 746h1v1h-1zM66 808h1v1h-1zM485 679h1v1h-1zM650 707h1v1h-1zM179 730h1v1h-1zM425 700h1v1h-1zM146 724h1v1h-1zM610 719h1v1h-1zM132 799h1v1h-1zM57 824h1v1h-1zM78 792h1v1h-1zM238 710h1v1h-1zM68 759h1v1h-1zM681 710h1v1h-1zM329 768h1v1h-1zM293 718h1v1h-1zM326 724h1v1h-1zM219 788h1v1h-1zM526 710h1v1h-1zM380 751h1v1h-1zM224 771h1v1h-1zM160 786h1v1h-1zM106 713h1v1h-1zM173 751h1v1h-1zM190 739h1v1h-1zM83 805h1v1h-1zM575 703h1v1h-1zM150 749h1v1h-1zM278 715h1v1h-1zM78 738h1v1h-1zM284 761h1v1h-1zM337 749h1v1h-1zM82 772h1v1h-1zM667 704h1v1h-1zM113 725h1v1h-1zM152 757h1v1h-1zM396 740h1v1h-1zM183 755h1v1h-1zM516 706h1v1h-1zM142 777h1v1h-1zM173 802h1v1h-1zM366 709h1v1h-1zM499 731h1v1h-1zM524 673h1v1h-1zM162 780h1v1h-1zM273 758h1v1h-1zM215 745h1v1h-1zM356 695h1v1h-1zM138 772h1v1h-1zM479 712h1v1h-1zM380 729h1v1h-1zM117 812h1v1h-1zM173 770h1v1h-1zM182 710h1v1h-1zM582 664h1v1h-1zM236 773h1v1h-1zM320 691h1v1h-1zM583 736h1v1h-1zM209 749h1v1h-1zM607 733h1v1h-1zM164 762h1v1h-1zM59 783h1v1h-1zM91 771h1v1h-1zM366 688h1v1h-1zM202 762h1v1h-1zM474 759h1v1h-1zM274 776h1v1h-1zM362 707h1v1h-1zM189 780h1v1h-1zM304 776h1v1h-1zM370 754h1v1h-1zM200 710h1v1h-1zM253 758h1v1h-1zM483 748h1v1h-1zM581 688h1v1h-1zM188 762h1v1h-1zM78 771h1v1h-1zM482 687h1v1h-1zM232 730h1v1h-1zM652 696h1v1h-1zM416 678h1v1h-1zM196 752h1v1h-1zM489 711h1v1h-1zM282 706h1v1h-1zM380 692h1v1h-1zM525 684h1v1h-1zM300 739h1v1h-1zM609 700h1v1h-1zM210 781h1v1h-1zM201 775h1v1h-1zM334 704h1v1h-1zM213 748h1v1h-1z"/>
<path fill="#00ff00" d="M318 748h1v1h-1zM411 747h1v1h-1zM165 719h1v1h-1zM466 686h1v1h-1zM410 749h1v1h-1zM300 693h1v1h-1zM296 713h1v1h-1zM203 773h1v1h-1zM652 660h1v1h-1zM205 768h1v1h-1zM143 783h1v1h-1zM288 766h1v1h-1zM569 699h1v1h-1zM576 698h1v1h-1zM299 738h1v1h-1zM207 774h1v1h-1zM404 694h1v1h-1zM288 751h1v1h-1zM464 730h1v1h-1zM473 711h1v1h-1zM373 747h1v1h-1zM660 656h1v1h-1zM339 725h1v1h-1zM665 666h1v1h-1zM341 744h1v1h-1zM134 775h1v1h-1zM327 758h1v1h-1zM419 742h1v1h-1zM221 760h1v1h-1zM115 738h1v1h-1zM189 751h1v1h-1zM430 690h1v1h-1zM130 803h1v1h-1zM58 801h1v1h-1zM519 728h1v1h-1zM658 670h1v1h-1zM508 732h1v1h-1zM446 710h1v1h-1zM392 709h1v1h-1zM284 764h1v1h-1zM341 693h1v1h-1zM403 691h1v1h-1zM179 786h1v1h-1zM129 800h1v1h-1zM367 725h1v1h-1zM313 728h1v1h-1zM715 669h1v1h-1zM217 759h1v1h-1zM217 721h1v1h-1zM98 743h1v1h-1zM60 795h1v1h-1zM104 745h1v1h-1zM306 736h1v1h-1zM640 651h1v1h-1zM94 768h1v1h-1zM112 805h1v1h-1zM360 695h1v1h-1zM168 772h1v1h-1zM70 752h1v1h-1zM528 697h1v1h-1zM108 753h1v1h-1zM227 719h1v1h-1zM409 676h1v1h-1zM429 689h1v1h-1zM624 690h1v1h-1zM306 749h1v1h-1zM107 770h1v1h-1zM83 794h1v1h-1zM336 738h1v1h-1zM276 736h1v1h-1zM146 785h1v1h-1zM114 780h1v1h-1zM188 773h1v1h-1zM162 779h1v1h-1zM190 770h1v1h-1zM189 748h1v1h-1zM408 760h1v1h-1zM239 772h1v1h-1zM487 734h1v1h-1zM259 720h1v1h-1zM163 769h1v1h-1zM574 730h1v1h-1zM341 707h1v1h-1zM482 705h1v1h-1zM140 738h1v1h-1zM662 695h1v1h-1zM331 742h1v1h-1zM199 745h1v1h-1zM147 802h1v1h-1zM89 723h1v1h-1zM66 816h1v1h-1zM125 731h1v1h-1zM171 744h1v1h-1zM273 722h1v1h-1zM209 771h1v1h-1zM70 735h1v1h-1zM106 768h1v1h-1zM61 786h1v1h-1zM68 808h1v1h-1zM166 777h1v1h-1zM333 702h1v1h-1zM109 727h1v1h-1zM524 713h1v1h-1zM703 664h1v1h-1zM319 718h1v1h-1zM71 776h1v1h-1zM120 771h1v1h-1zM263 736h1v1h-1zM589 707h1v1h-1zM685 666h1v1h-1zM397 738h1v1h-1zM531 710h1v1h-1zM89 819h1v1h-1zM261 699h1v1h-1zM247 770h1v1h-1zM133 737h1v1h-1zM291 723h1v1h-1zM290 742h1v1h-1zM657 654h1v1h-1zM78 821h1v1h-1zM167 787h1v1h-1zM116 788h1v1h-1zM136 755h1v1h-1zM175 743h1v1h-1zM196 725h1v1h-1zM627 668h1v1h-1zM179 794h1v1h-1zM250 737h1v1h-1zM114 782h1v1h-1zM135 757h1v1h-1zM134 767h1v1h-1zM294 757h1v1h-1zM167 803h1v1h-1zM158 777h1v1h-1zM270 745h1v1h-1zM60 794h1v1h-1zM502 713h1v1h-1zM72 765h1v1h-1zM215 756h1v1h-1zM708 668h1v1h-1zM115 781h1v1h-1zM70 779h1v1h-1zM251 753h1v1h-1zM328 709h1v1h-1zM202 738h1v1h-1zM135 725h1v1h-1zM366 762h1v1h-1zM305 694h1v1h-1zM187 779h1v1h-1zM320 701h1v1h-1zM480 739h1v1h-1zM265 710h1v1h-1zM205 745h1v1h-1zM320 717h1v1h-1zM260 747h1v1h-1zM89 782h1v1h-1zM546 727h1v1h-1zM99 807h1v1h-1zM401 713h1v1h-1zM226 765h1v1h-1zM431 762h1v1h-1zM269 759h1v1h-1zM462 742h1v1h-1zM243 767h1v1h-1zM146 775h1v1h-1zM421 687h1v1h-1zM468 711h1v1h-1zM259 705h1v1h-1zM581 734h1v1h-1zM376 716h1v1h-1zM586 665h1v1h-1zM125 713h1v1h-1zM603 692h1v1h-1zM419 709h1v1h-1zM602 656h1v1h-1zM188 791h1v1h-1zM287 710h1v1h-1zM536 690h1v1h-1zM354 717h1v1h-1zM163 774h1v1h-1zM163 798h1v1h-1zM607 731h1v1h-1zM353 702h1v1h-1zM73 796h1v1h-1zM150 725h1v1h-1zM287 762h1v1h-1zM123 738h1v1h-1zM241 738h1v1h-1zM351 747h1v1h-1zM84 795h1v1h-1zM148 775h1v1h-1zM520 714h1v1h-1zM69 804h1v1h-1zM94 800h1v1h-1zM462 668h1v1h-1zM356 739h1v1h-1zM244 737h1v1h-1zM498 695h1v1h-1zM130 778h1v1h-1zM56 730h1v1h-1zM455 724h1v1h-1zM332 764h1v1h-1zM183 791h1v1h-1zM299 755h1v1h-1zM83 818h1v1h-1zM172 745h1v1h-1zM293 742h1v1h-1zM484 744h1v1h-1zM174 717h1v1h-1zM76 760h1v1h-1zM85 768h1v1h-1zM170 710h1v1h-1zM326 732h1v1h-1zM375 748h1v1h-1zM368 706h1v1h-1zM514 677h1v1h-1zM360 769h1v1h-1zM353 731h1v1h-1zM307 749h1v1h-1zM350 692h1v1h-1zM392 759h1v1h-1zM669 660h1v1h-1zM119 796h1v1h-1zM336 724h1v1h-1zM99 749h1v1h-1zM129 747h1v1h-1zM577 741h1v1h-1zM212 743h1v1h-1zM293 777h1v1h-1zM132 797h1v1h-1zM263 776h1v1h-1zM63 812h1v1h-1zM300 702h1v1h-1zM621 692h1v1h-1zM363 760h1v1h-1zM349 731h1v1h-1zM286 773h1v1h-1zM176 786h1v1h-1zM424 709h1v1h-1zM205 729h1v1h-1zM182 749h1v1h-1zM282 698h1v1h-1zM665 660h1v1h-1zM395 695h1v1h-1zM355 728h1v1h-1zM100 731h1v1h-1zM451 728h1v1h-1zM221 716h1v1h-1zM327 744h1v1h-1zM289 704h1v1h-1zM433 748h1v1h-1zM66 749h1v1h-1zM89 776h1v1h-1zM159 725h1v1h-1zM128 763h1v1h-1zM359 694h1v1h-1zM96 759h1v1h-1zM87 757h1v1h-1zM273 707h1v1h-1zM78 814h1v1h-1zM440 695h1v1h-1zM180 748h1v1h-1zM168 739h1v1h-1zM309 727h1v1h-1zM669 705h1v1h-1zM160 762h1v1h-1zM137 712h1v1h-1zM196 753h1v1h-1zM428 688h1v1h-1zM587 732h1v1h-1zM110 762h1v1h-1zM65 755h1v1h-1zM169 762h1v1h-1zM176 790h1v1h-1zM404 694h1v1h-1zM359 715h1v1h-1zM404 730h1v1h-1zM207 784h1v1h-1zM223 719h1v1h-1zM600 675h1v1h-1zM71 745h1v1h-1zM62 746h1v1h-1zM60 795h1v1h-1zM459 707h1v1h-1zM267 750h1v1h-1zM368 732h1v1h-1zM342 732h1v1h-1zM456 702h1v1h-1zM273 699h1v1h-1zM179 762h1v1h-1zM94 785h1v1h-1zM215 732h1v1h-1zM125 750h1v1h-1zM577 705h1v1h-1zM416 710h1v1h-1zM161 755h1v1h-1zM263 719h1v1h-1zM243 768h1v1h-1zM313 715h1v1h-1zM609 690h1v1h-1zM157 724h1v1h-1zM319 718h1v1h-1zM260 723h1v1h-1zM622 663h1v1h-1zM134 786h1v1h-1zM339 756h1v1h-1zM86 743h1v1h-1zM280 770h1v1h-1zM632 650h1v1h-1zM384 713h1v1h-1zM65 780h1v1h-1zM691 667h1v1h-1zM278 772h1v1h-1zM299 731h1v1h-1zM606 661h1v1h-1zM302 774h1v1h-1zM135 720h1v1h-1zM224 758h1v1h-1zM405 733h1v1h-1zM209 712h1v1h-1zM115 733h1v1h-1zM205 761h1v1h-1zM91 726h1v1h-1zM90 824h1v1h-1zM97 750h1v1h-1zM262 729h1v1h-1zM176 731h1v1h-1zM119 809h1v1h-1zM398 731h1v1h-1zM317 738h1v1h-1zM461 747h1v1h-1zM112 760h1v1h-1zM322 709h1v1h-1zM152 723h1v1h-1zM255 766h1v1h-1zM232 744h1v1h-1zM301 692h1v1h-1zM294 769h1v1h-1zM566 691h1v1h-1zM325 741h1v1h-1zM189 712h1v1h-1zM440 712h1v1h-1zM112 720h1v1h-1zM425 750h1v1h-1zM298 726h1v1h-1zM151 757h1v1h-1zM408 765h1v1h-1zM95 789h1v1h-1zM67 747h1v1h-1zM155 754h1v1h-1zM260 739h1v1h-1zM328 741h1v1h-1zM173 753h1v1h-1zM299 747h1v1h-1zM681 660h1v1h-1zM767 645h1v1h-1zM386 719h1v1h-1zM168 769h1v1h-1zM246 758h1v1h-1zM451 711h1v1h-1zM528 741h1v1h-1zM616 659h1v1h-1zM205 766h1v1h-1zM183 799h1v1h-1zM182 762h1v1h-1zM433 680h1v1h-1zM627 703h1v1h-1zM290 742h1v1h-1zM230 706h1v1h-1zM350 701h1v1h-1zM220 765h1v1h-1zM294 765h1v1h-1zM122 772h1v1h-1zM89 788h1v1h-1zM213 719h1v1h-1zM154 750h1v1h-1zM109 719h1v1h-1zM642 658h1v1h-1zM369 702h1v1h-1zM205 754h1v1h-1zM721 688h1v1h-1zM92 770h1v1h-1zM188 735h1v1h-1zM524 675h1v1h-1zM649 666h1v1h-1zM439 713h1v1h-1zM122 736h1v1h-1zM292 741h1v1h-1zM79 740h1v1h-1zM77 805h1v1h-1zM502 675h1v1h-1zM89 805h1v1h-1zM92 795h1v1h-1zM379 743h1v1h-1zM327 729h1v1h-1zM133 725h1v1h-1zM215 711h1v1h-1zM617 689h1v1h-1zM131 797h1v1h-1zM78 735h1v1h-1zM338 689h1v1h-1zM93 812h1v1h-1zM287 722h1v1h-1zM149 760h1v1h-1zM66 749h1v1h-1zM345 721h1v1h-1zM407 764h1v1h-1zM173 769h1v1h-1zM111 787h1v1h-1zM670 680h1v1h-1zM145 812h1v1h-1zM145 785h1v1h-1zM195 777h1v1h-1zM143 800h1v1h-1zM145 766h1v1h-1zM574 719h1v1h-1zM83 772h1v1h-1zM475 737h1v1h-1zM275 720h1v1h-1zM67 803h1v1h-1zM108 747h1v1h-1zM343 710h1v1h-1zM289 763h1v1h-1zM143 765h1v1h-1zM163 772h1v1h-1zM578 698h1v1h-1zM397 707h1v1h-1zM347 769h1v1h-1zM574 722h1v1h-1zM139 749h1v1h-1zM180 790h1v1h-1zM478 687h1v1h-1zM229 752h1v1h-1zM232 783h1v1h-1zM452 702h1v1h-1zM781 695h1v1h-1zM528 668h1v1h-1zM422 691h1v1h-1zM232 707h1v1h-1zM375 693h1v1h-1zM137 798h1v1h-1zM148 809h1v1h-1zM129 777h1v1h-1zM360 728h1v1h-1zM610 710h1v1h-1zM410 711h1v1h-1zM153 734h1v1h-1zM346 709h1v1h-1zM188 717h1v1h-1zM465 705h1v1h-1zM250 711h1v1h-1zM147 806h1v1h-1zM163 807h1v1h-1zM84 769h1v1h-1zM193 725h1v1h-1zM184 776h1v1h-1zM237 770h1v1h-1zM344 764h1v1h-1zM580 739h1v1h-1zM459 686h1v1h-1zM296 743h1v1h-1zM193 721h1v1h-1zM116 715h1v1h-1zM306 713h1v1h-1zM77 728h1v1h-1zM73 805h1v1h-1zM335 754h1v1h-1zM113 784h1v1h-1zM488 742h1v1h-1zM352 693h1v1h-1zM270 774h1v1h-1zM591 689h1v1h-1zM101 798h1v1h-1zM171 749h1v1h-1zM262 750h1v1h-1zM643 672h1v1h-1zM82 808h1v1h-1zM312 739h1v1h-1zM567 733h1v1h-1zM106 785h1v1h-1zM374 684h1v1h-1zM365 689h1v1h-1zM193 797h1v1h-1zM276 708h1v1h-1zM590 673h1v1h-1zM242 772h1v1h-1zM236 783h1v1h-1zM291 706h1v1h-1zM66 819h1v1h-1zM453 672h1v1h-1zM72 770h1v1h-1zM676 654h1v1h-1zM655 686h1v1h-1zM460 738h1v1h-1zM537 702h1v1h-1zM320 727h1v1h-1zM169 796h1v1h-1zM313 718h1v1h-1zM358 688h1v1h-1zM105 715h1v1h-1zM425 700h1v1h-1zM169 747h1v1h-1zM264 769h1v1h-1zM153 713h1v1h-1zM160 728h1v1h-1zM516 688h1v1h-1zM421 694h1v1h-1zM76 744h1v1h-1zM422 724h1v1h-1zM575 722h1v1h-1zM374 695h1v1h-1zM366 773h1v1h-1zM152 785h1v1h-1zM371 726h1v1h-1zM201 785h1v1h-1zM572 714h1v1h-1zM374 696h1v1h-1zM177 745h1v1h-1zM524 698h1v1h-1zM424 751h1v1h-1zM127 770h1v1h-1zM133 800h1v1h-1zM59 786h1v1h-1zM421 730h1v1h-1zM85 775h1v1h-1zM157 779h1v1h-1zM396 691h1v1h-1zM169 760h1v1h-1zM161 721h1v1h-1zM78 793h1v1h-1zM72 812h1v1h-1zM295 746h1v1h-1zM104 733h1v1h-1zM640 706h1v1h-1zM63 750h1v1h-1zM174 739h1v1h-1zM121 789h1v1h-1zM541 722h1v1h-1zM407 743h1v1h-1zM94 778h1v1h-1zM74 766h1v1h-1zM84 794h1v1h-1zM399 697h1v1h-1zM404 766h1v1h-1zM330 702h1v1h-1zM252 765h1v1h-1zM240 708h1v1h-1zM308 770h1v1h-1zM93 730h1v1h-1zM440 733h1v1h-1zM427 731h1v1h-1zM359 766h1v1h-1zM141 778h1v1h-1zM133 782h1v1h-1zM680 649h1v1h-1zM611 663h1v1h-1zM405 747h1v1h-1zM433 718h1v1h-1zM237 777h1v1h-1zM516 737h1v1h-1zM365 722h1v1h-1zM228 745h1v1h-1zM359 693h1v1h-1zM82 730h1v1h-1zM208 767h1v1h-1zM483 695h1v1h-1zM248 734h1v1h-1zM287 718h1v1h-1zM289 743h1v1h-1zM602 697h1v1h-1zM127 755h1v1h-1zM359 742h1v1h-1zM233 747h1v1h-1zM141 726h1v1h-1zM71 791h1v1h-1zM317 728h1v1h-1zM121 771h1v1h-1zM301 703h1v1h-1zM224 757h1v1h-1zM213 756h1v1h-1zM528 685h1v1h-1zM86 789h1v1h-1zM289 707h1v1h-1zM217 739h1v1h-1zM109 799h1v1h-1zM208 760h1v1h-1zM506 737h1v1h-1zM126 776h1v1h-1zM358 747h1v1h-1zM154 774h1v1h-1zM267 706h1v1h-1zM284 720h1v1h-1zM79 760h1v1h-1zM451 686h1v1h-1zM201 728h1v1h-1zM131 724h1v1h-1zM130 803h1v1h-1zM696 651h1v1h-1zM602 717h1v1h-1zM243 761h1v1h-1zM155 729h1v1h-1zM377 753h1v1h-1zM73 724h1v1h-1zM498 665h1v1h-1zM56 821h1v1h-1zM72 764h1v1h-1zM181 723h1v1h-1zM236 743h1v1h-1zM56 774h1v1h-1zM161 751h1v1h-1zM691 685h1v1h-1zM424 708h1v1h-1zM75 755h1v1h-1zM516 669h1v1h-1zM241 777h1v1h-1zM711 699h1v1h-1zM176 805h1v1h-1zM171 785h1v1h-1zM358 750h1v1h-1zM252 708h1v1h-1zM157 772h1v1h-1zM270 725h1v1h-1zM332 742h1v1h-1zM172 713h1v1h-1zM465 736h1v1h-1zM405 738h1v1h-1zM408 729h1v1h-1zM346 754h1v1h-1zM139 804h1v1h-1zM375 720h1v1h-1zM117 806h1v1h-1zM105 815h1v1h-1zM260 703h1v1h-1zM116 777h1v1h-1zM100 810h1v1h-1zM306 732h1v1h-1zM667 696h1v1h-1zM74 751h1v1h-1zM231 758h1v1h-1zM86 798h1v1h-1zM277 726h1v1h-1zM297 742h1v1h-1zM253 709h1v1h-1zM68 794h1v1h-1zM372 747h1v1h-1zM262 769h1v1h-1zM296 755h1v1h-1zM351 752h1v1h-1zM550 698h1v1h-1zM226 764h1v1h-1zM559 674h1v1h-1zM118 792h1v1h-1zM235 708h1v1h-1zM118 788h1v1h-1zM198 753h1v1h-1zM547 673h1v1h-1zM666 656h1v1h-1zM244 717h1v1h-1zM157 746h1v1h-1zM177 776h1v1h-1zM544 686h1v1h-1zM228 733h1v1h-1zM126 811h1v1h-1zM475 734h1v1h-1zM263 700h1v1h-1zM223 731h1v1h-1zM546 683h1v1h-1zM403 733h1v1h-1zM59 719h1v1h-1zM646 705h1v1h-1zM236 775h1v1h-1zM119 778h1v1h-1zM555 711h1v1h-1zM219 775h1v1h-1zM361 705h1v1h-1zM407 692h1v1h-1zM125 799h1v1h-1zM690 674h1v1h-1zM290 696h1v1h-1zM74 787h1v1h-1zM276 734h1v1h-1zM61 794h1v1h-1zM677 692h1v1h-1zM350 749h1v1h-1zM201 718h1v1h-1zM444 738h1v1h-1zM440 752h1v1h-1zM372 685h1v1h-1zM141 791h1v1h-1zM87 777h1v1h-1zM495 690h1v1h-1zM529 717h1v1h-1zM186 706h1v1h-1zM204 763h1v1h-1zM212 774h1v1h-1zM157 795h1v1h-1zM595 664h1v1h-1zM274 769h1v1h-1zM378 693h1v1h-1zM314 738h1v1h-1zM86 721h1v1h-1zM80 800h1v1h-1zM107 741h1v1h-1zM256 709h1v1h-1zM327 719h1v1h-1zM744 709h1v1h-1zM543 669h1v1h-1zM398 698h1v1h-1zM203 767h1v1h-1zM186 722h1v1h-1zM370 768h1v1h-1zM186 795h1v1h-1zM418 749h1v1h-1zM391 708h1v1h-1zM97 789h1v1h-1zM448 755h1v1h-1zM87 772h1v1h-1zM174 717h1v1h-1zM666 714h1v1h-1zM341 717h1v1h-1zM495 728h1v1h-1zM577 695h1v1h-1zM153 778h1v1h-1zM441 721h1v1h-1zM198 790h1v1h-1zM77 772h1v1h-1zM92 779h1v1h-1zM99 760h1v1h-1zM329 756h1v1h-1zM335 685h1v1h-1zM487 752h1v1h-1zM165 778h1v1h-1zM415 696h1v1h-1zM153 791h1v1h-1zM173 783h1v1h-1zM343 734h1v1h-1zM207 730h1v1h-1zM762 659h1v1h-1zM174 779h1v1h-1zM142 750h1v1h-1zM519 741h1v1h-1zM512 673h1v1h-1zM113 758h1v1h-1zM183 709h1v1h-1zM263 757h1v1h-1zM78 768h1v1h-1zM197 735h1v1h-1zM421 744h1v1h-1zM420 694h1v1h-1zM108 738h1v1h-1zM168 726h1v1h-1zM154 795h1v1h-1zM361 708h1v1h-1zM101 752h1v1h-1zM698 705h1v1h-1zM95 807h1v1h-1zM272 709h1v1h-1zM374 732h1v1h-1zM611 716h1v1h-1zM319 744h1v1h-1zM494 698h1v1h-1zM273 770h1v1h-1zM135 793h1v1h-1zM220 741h1v1h-1zM315 697h1v1h-1zM273 724h1v1h-1zM431 678h1v1h-1zM278 750h1v1h-1zM203 754h1v1h-1zM265 746h1v1h-1zM268 746h1v1h-1zM58 801h1v1h-1zM179 727h1v1h-1zM296 758h1v1h-1zM380 732h1v1h-1zM223 744h1v1h-1zM403 683h1v1h-1zM259 752h1v1h-1zM197 742h1v1h-1zM144 770h1v1h-1zM443 696h1v1h-1zM571 705h1v1h-1zM391 760h1v1h-1zM135 756h1v1h-1zM375 740h1v1h-1zM260 765h1v1h-1zM574 725h1v1h-1zM57 829h1v1h-1zM423 707h1v1h-1zM241 737h1v1h-1zM495 689h1v1h-1zM314 740h1v1h-1zM57 796h1v1h-1zM366 728h1v1h-1zM275 733h1v1h-1zM142 722h1v1h-1zM98 783h1v1h-1zM210 773h1v1h-1zM289 766h1v1h-1zM247 746h1v1h-1zM60 765h1v1h-1zM107 768h1v1h-1zM359 712h1v1h-1zM281 724h1v1h-1zM401 758h1v1h-1zM217 758h1v1h-1zM149 776h1v1h-1zM443 748h1v1h-1zM134 752h1v1h-1zM76 748h1v1h-1zM196 795h1v1h-1zM234 747h1v1h-1zM131 800h1v1h-1zM624 659h1v1h-1zM139 756h1v1h-1zM98 804h1v1h-1zM347 725h1v1h-1zM105 807h1v1h-1zM159 783h1v1h-1zM217 739h1v1h-1zM156 776h1v1h-1zM342 702h1v1h-1zM104 718h1v1h-1zM336 711h1v1h-1zM95 783h1v1h-1zM300 696h1v1h-1zM676 716h1v1h-1zM434 705h1v1h-1zM608 706h1v1h-1zM281 712h1v1h-1zM111 814h1v1h-1zM197 740h1v1h-1zM426 754h1v1h-1zM101 791h1v1h-1zM349 715h1v1h-1zM176 797h1v1h-1zM565 687h1v1h-1zM188 749h1v1h-1zM176 786h1v1h-1zM156 760h1v1h-1zM278 750h1v1h-1zM619 728h1v1h-1zM278 725h1v1h-1zM400 700h1v1h-1zM268 701h1v1h-1zM83 728h1v1h-1zM303 747h1v1h-1zM307 721h1v1h-1zM309 725h1v1h-1zM166 804h1v1h-1zM153 734h1v1h-1zM179 773h1v1h-1zM65 778h1v1h-1zM112 764h1v1h-1zM162 753h1v1h-1zM264 745h1v1h-1zM557 669h1v1h-1zM372 766h1v1h-1zM266 731h1v1h-1zM383 749h1v1h-1zM231 710h1v1h-1zM71 732h1v1h-1zM363 707h1v1h-1zM375 697h1v1h-1zM343 707h1v1h-1zM491 701h1v1h-1zM430 697h1v1h-1zM470 675h1v1h-1zM70 806h1v1h-1zM793 654h1v1h-1zM304 765h1v1h-1zM307 739h1v1h-1zM318 747h1v1h-1zM155 741h1v1h-1zM168 749h1v1h-1zM516 668h1v1h-1zM311 715h1v1h-1zM633 726h1v1h-1zM130 790h1v1h-1zM303 767h1v1h-1zM311 723h1v1h-1zM67 798h1v1h-1zM326 688h1v1h-1zM203 780h1v1h-1zM224 707h1v1h-1zM121 745h1v1h-1zM308 713h1v1h-1zM354 706h1v1h-1zM533 665h1v1h-1zM481 725h1v1h-1zM680 668h1v1h-1zM668 658h1v1h-1zM372 717h1v1h-1zM159 745h1v1h-1zM278 751h1v1h-1zM84 783h1v1h-1zM292 727h1v1h-1zM169 772h1v1h-1zM276 779h1v1h-1zM406 675h1v1h-1zM76 750h1v1h-1zM515 715h1v1h-1zM68 771h1v1h-1zM253 748h1v1h-1zM134 730h1v1h-1zM68 775h1v1h-1zM248 720h1v1h-1zM151 728h1v1h-1zM82 809h1v1h-1zM465 704h1v1h-1zM145 736h1v1h-1zM594 670h1v1h-1zM316 702h1v1h-1zM190 773h1v1h-1zM76 738h1v1h-1zM494 711h1v1h-1zM93 730h1v1h-1zM426 691h1v1h-1zM272 755h1v1h-1zM236 738h1v1h-1zM83 783h1v1h-1zM220 707h1v1h-1zM60 778h1v1h-1zM416 753h1v1h-1zM376 727h1v1h-1zM103 819h1v1h-1zM263 766h1v1h-1zM119 771h1v1h-1zM379 726h1v1h-1zM123 813h1v1h-1zM117 774h1v1h-1zM161 781h1v1h-1zM657 700h1v1h-1zM460 704h1v1h-1zM212 800h1v1h-1zM440 757h1v1h-1zM193 775h1v1h-1zM122 739h1v1h-1zM539 673h1v1h-1zM67 747h1v1h-1zM439 752h1v1h-1zM632 664h1v1h-1zM84 748h1v1h-1zM498 677h1v1h-1zM429 718h1v1h-1zM69 810h1v1h-1zM231 735h1v1h-1zM151 765h1v1h-1zM203 792h1v1h-1zM202 734h1v1h-1zM208 761h1v1h-1zM58 723h1v1h-1zM155 748h1v1h-1zM163 727h1v1h-1zM339 764h1v1h-1zM369 719h1v1h-1zM406 694h1v1h-1zM332 735h1v1h-1zM536 714h1v1h-1zM287 730h1v1h-1zM173 756h1v1h-1zM68 785h1v1h-1zM390 736h1v1h-1zM290 719h1v1h-1zM113 733h1v1h-1zM263 759h1v1h-1zM604 662h1v1h-1zM314 766h1v1h-1zM171 733h1v1h-1zM450 724h1v1h-1zM208 752h1v1h-1zM60 802h1v1h-1zM82 809h1v1h-1zM635 720h1v1h-1zM87 726h1v1h-1zM431 725h1v1h-1zM65 739h1v1h-1zM221 748h1v1h-1zM160 739h1v1h-1zM186 760h1v1h-1zM86 729h1v1h-1zM211 739h1v1h-1zM413 735h1v1h-1zM270 766h1v1h-1zM101 810h1v1h-1zM449 739h1v1h-1zM510 697h1v1h-1zM236 757h1v1h-1zM192 724h1v1h-1zM61 792h1v1h-1zM79 729h1v1h-1zM199 788h1v1h-1zM95 788h1v1h-1zM652 687h1v1h-1zM336 755h1v1h-1zM172 743h1v1h-1zM302 711h1v1h-1zM115 802h1v1h-1zM564 722h1v1h-1zM258 778h1v1h-1zM371 711h1v1h-1zM120 809h1v1h-1zM245 755h1v1h-1zM381 688h1v1h-1zM205 771h1v1h-1zM77 810h1v1h-1zM243 760h1v1h-1zM465 683h1v1h-1zM239 776h1v1h-1zM679 661h1v1h-1zM289 769h1v1h-1zM523 729h1v1h-1zM66 747h1v1h-1zM329 726h1v1h-1zM263 762h1v1h-1zM192 741h1v1h-1zM545 727h1v1h-1zM87 726h1v1h-1zM251 727h1v1h-1zM170 716h1v1h-1zM632 679h1v1h-1zM430 711h1v1h-1zM127 725h1v1h-1zM100 761h1v1h-1zM63 815h1v1h-1zM119 758h1v1h-1zM581 713h1v1h-1zM512 684h1v1h-1zM445 685h1v1h-1zM210 740h1v1h-1zM249 720h1v1h-1zM297 741h1v1h-1zM453 740h1v1h-1zM56 825h1v1h-1zM120 829h1v1h-1zM300 754h1v1h-1zM105 788h1v1h-1zM594 720h1v1h-1zM70 760h1v1h-1zM662 671h1v1h-1zM133 754h1v1h-1zM125 738h1v1h-1zM221 716h1v1h-1zM333 712h1v1h-1zM678 697h1v1h-1zM246 754h1v1h-1zM540 737h1v1h-1zM531 737h1v1h-1zM693 665h1v1h-1zM193 772h1v1h-1zM245 712h1v1h-1zM62 799h1v1h-1zM203 775h1v1h-1zM190 725h1v1h-1zM99 753h1v1h-1zM473 673h1v1h-1zM158 767h1v1h-1zM101 727h1v1h-1zM95 785h1v1h-1zM63 806h1v1h-1zM410 719h1v1h-1zM274 718h1v1h-1zM270 711h1v1h-1zM217 728h1v1h-1zM640 653h1v1h-1zM200 748h1v1h-1zM245 745h1v1h-1zM365 721h1v1h-1zM581 672h1v1h-1zM497 713h1v1h-1zM521 750h1v1h-1zM121 768h1v1h-1zM605 693h1v1h-1zM465 691h1v1h-1zM180 722h1v1h-1zM449 696h1v1h-1zM619 665h1v1h-1zM401 695h1v1h-1zM398 695h1v1h-1zM478 700h1v1h-1zM518 673h1v1h-1zM430 699h1v1h-1zM82 836h1v1h-1zM130 815h1v1h-1zM97 723h1v1h-1zM241 732h1v1h-1zM77 810h1v1h-1zM284 704h1v1h-1zM574 731h1v1h-1zM684 690h1v1h-1zM67 796h1v1h-1zM360 756h1v1h-1zM105 787h1v1h-1zM501 732h1v1h-1zM65 796h1v1h-1zM91 812h1v1h-1zM177 742h1v1h-1zM56 785h1v1h-1zM347 712h1v1h-1zM129 723h1v1h-1zM385 686h1v1h-1zM613 687h1v1h-1zM243 726h1v1h-1zM243 776h1v1h-1zM749 650h1v1h-1zM173 737h1v1h-1zM526 696h1v1h-1zM380 710h1v1h-1zM58 815h1v1h-1zM166 755h1v1h-1zM386 750h1v1h-1zM70 736h1v1h-1zM496 711h1v1h-1zM558 737h1v1h-1zM413 684h1v1h-1zM454 703h1v1h-1zM309 707h1v1h-1zM452 688h1v1h-1zM242 723h1v1h-1zM214 756h1v1h-1zM373 746h1v1h-1zM241 772h1v1h-1zM171 743h1v1h-1zM153 800h1v1h-1zM227 753h1v1h-1zM202 714h1v1h-1zM409 685h1v1h-1zM432 692h1v1h-1zM443 742h1v1h-1zM484 674h1v1h-1zM194 771h1v1h-1zM197 716h1v1h-1zM478 696h1v1h-1zM119 720h1v1h-1zM373 695h1v1h-1zM270 736h1v1h-1zM350 746h1v1h-1zM369 687h1v1h-1zM351 743h1v1h-1zM141 772h1v1h-1zM63 755h1v1h-1zM618 723h1v1h-1zM540 711h1v1h-1zM260 767h1v1h-1zM347 734h1v1h-1zM86 731h1v1h-1zM237 715h1v1h-1zM304 695h1v1h-1zM371 708h1v1h-1z"/>
<path fill="#0080ff" d="M682 640h1v1h-1zM377 552h1v1h-1zM555 616h1v1h-1zM192 628h1v1h-1zM720 609h1v1h-1zM239 686h1v1h-1zM474 600h1v1h-1zM583 570h1v1h-1zM284 562h1v1h-1zM232 612h1v1h-1zM274 617h1v1h-1zM105 636h1v1h-1zM82 688h1v1h-1zM631 602h1v1h-1zM363 602h1v1h-1zM87 709h1v1h-1zM325 650h1v1h-1zM155 697h1v1h-1zM506 659h1v1h-1zM204 651h1v1h-1zM61 592h1v1h-1zM372 619h1v1h-1zM750 586h1v1h-1zM421 676h1v1h-1zM659 499h1v1h-1zM94 716h1v1h-1zM174 705h1v1h-1zM450 682h1v1h-1zM255 546h1v1h-1zM125 668h1v1h-1zM197 587h1v1h-1zM171 663h1v1h-1zM397 629h1v1h-1zM448 581h1v1h-1zM420 550h1v1h-1zM373 563h1v1h-1zM429 624h1v1h-1zM598 568h1v1h-1zM161 702h1v1h-1zM168 628h1v1h-1zM705 555h1v1h-1zM547 626h1v1h-1zM371 599h1v1h-1zM465 632h1v1h-1zM357 580h1v1h-1zM181 702h1v1h-1zM311 632h1v1h-1zM153 584h1v1h-1zM92 637h1v1h-1zM195 580h1v1h-1zM477 544h1v1h-1zM109 608h1v1h-1zM72 621h1v1h-1zM149 619h1v1h-1zM457 603h1v1h-1zM549 562h1v1h-1zM166 603h1v1h-1zM657 478h1v1h-1zM263 709h1v1h-1zM386 676h1v1h-1zM373 616h1v1h-1zM246 558h1v1h-1zM507 619h1v1h-1zM565 606h1v1h-1zM260 703h1v1h-1zM178 629h1v1h-1zM617 463h1v1h-1zM394 604h1v1h-1zM207 682h1v1h-1zM119 633h1v1h-1zM221 655h1v1h-1zM246 657h1v1h-1zM482 668h1v1h-1zM396 582h1v1h-1zM280 698h1v1h-1zM578 535h1v1h-1zM322 694h1v1h-1zM529 560h1v1h-1zM79 675h1v1h-1zM85 676h1v1h-1zM525 607h1v1h-1zM420 657h1v1h-1zM159 688h1v1h-1zM101 587h1v1h-1zM82 594h1v1h-1zM186 686h1v1h-1zM552 623h1v1h-1zM130 583h1v1h-1zM155 622h1v1h-1zM498 544h1v1h-1zM128 667h1v1h-1zM151 612h1v1h-1zM428 587h1v1h-1zM522 566h1v1h-1zM626 590h1v1h-1zM72 591h1v1h-1zM191 657h1v1h-1zM337 673h1v1h-1zM192 694h1v1h-1zM424 630h1v1h-1zM145 594h1v1h-1zM334 642h1v1h-1zM118 628h1v1h-1zM113 612h1v1h-1zM468 660h1v1h-1zM348 544h1v1h-1zM312 642h1v1h-1zM212 606h1v1h-1zM377 568h1v1h-1zM643 654h1v1h-1zM212 631h1v1h-1zM73 583h1v1h-1zM159 561h1v1h-1zM454 629h1v1h-1zM176 667h1v1h-1zM434 618h1v1h-1zM135 662h1v1h-1zM329 555h1v1h-1zM208 674h1v1h-1zM293 642h1v1h-1zM212 674h1v1h-1zM327 561h1v1h-1zM422 584h1v1h-1zM395 674h1v1h-1zM239 570h1v1h-1zM69 707h1v1h-1zM494 565h1v1h-1zM96 685h1v1h-1zM214 696h1v1h-1zM461 569h1v1h-1zM699 570h1v1h-1zM413 638h1v1h-1zM99 668h1v1h-1zM665 533h1v1h-1zM73 622h1v1h-1zM68 689h1v1h-1zM420 648h1v1h-1zM592 582h1v1h-1zM356 675h1v1h-1zM541 635h1v1h-1zM360 578h1v1h-1zM87 631h1v1h-1zM342 688h1v1h-1zM443 615h1v1h-1zM272 643h1v1h-1zM402 581h1v1h-1zM258 575h1v1h-1zM94 687h1v1h-1zM527 553h1v1h-1zM137 690h1v1h-1zM136 628h1v1h-1zM105 679h1v1h-1zM199 626h1v1h-1zM225 547h1v1h-1zM133 603h1v1h-1zM118 665h1v1h-1zM249 607h1v1h-1zM59 630h1v1h-1zM270 632h1v1h-1zM96 645h1v1h-1zM107 707h1v1h-1zM101 636h1v1h-1zM512 593h1v1h-1zM484 552h1v1h-1zM713 508h1v1h-1zM475 656h1v1h-1zM278 642h1v1h-1zM221 598h1v1h-1zM322 698h1v1h-1zM349 689h1v1h-1zM726 516h1v1h-1zM193 635h1v1h-1zM573 565h1v1h-1zM640 592h1v1h-1zM646 622h1v1h-1zM346 594h1v1h-1zM340 657h1v1h-1zM761 586h1v1h-1zM231 676h1v1h-1zM451 550h1v1h-1zM85 669h1v1h-1zM150 619h1v1h-1zM277 673h1v1h-1zM420 605h1v1h-1zM125 690h1v1h-1zM487 652h1v1h-1zM316 563h1v1h-1zM107 709h1v1h-1zM69 644h1v1h-1zM223 630h1v1h-1zM489 549h1v1h-1zM692 648h1v1h-1zM438 513h1v1h-1zM144 587h1v1h-1zM565 614h1v1h-1zM116 708h1v1h-1zM223 593h1v1h-1zM374 672h1v1h-1zM195 618h1v1h-1zM190 636h1v1h-1zM240 579h1v1h-1zM574 586h1v1h-1zM258 598h1v1h-1zM88 684h1v1h-1zM203 579h1v1h-1zM323 666h1v1h-1zM297 582h1v1h-1zM649 553h1v1h-1zM279 638h1v1h-1zM462 619h1v1h-1zM431 664h1v1h-1zM257 597h1v1h-1zM233 670h1v1h-1zM254 586h1v1h-1zM101 600h1v1h-1zM88 695h1v1h-1zM99 680h1v1h-1zM105 629h1v1h-1zM86 616h1v1h-1zM222 557h1v1h-1zM113 609h1v1h-1zM695 449h1v1h-1zM227 612h1v1h-1zM56 603h1v1h-1zM368 556h1v1h-1zM405 535h1v1h-1zM635 525h1v1h-1zM153 600h1v1h-1zM185 619h1v1h-1zM429 677h1v1h-1zM346 559h1v1h-1zM346 600h1v1h-1zM614 600h1v1h-1zM762 597h1v1h-1zM58 589h1v1h-1zM218 551h1v1h-1zM628 537h1v1h-1zM61 664h1v1h-1zM195 608h1v1h-1zM441 513h1v1h-1zM83 724h1v1h-1zM324 660h1v1h-1zM594 650h1v1h-1zM293 637h1v1h-1zM56 572h1v1h-1zM98 581h1v1h-1zM228 595h1v1h-1zM59 646h1v1h-1zM369 663h1v1h-1zM164 674h1v1h-1zM197 580h1v1h-1zM457 553h1v1h-1zM419 561h1v1h-1zM470 551h1v1h-1zM130 673h1v1h-1zM197 614h1v1h-1zM353 620h1v1h-1zM276 623h1v1h-1zM476 586h1v1h-1zM230 664h1v1h-1zM582 631h1v1h-1zM142 663h1v1h-1zM364 659h1v1h-1zM470 553h1v1h-1zM726 589h1v1h-1zM214 700h1v1h-1zM551 583h1v1h-1zM332 559h1v1h-1zM356 610h1v1h-1zM158 669h1v1h-1zM545 549h1v1h-1zM80 595h1v1h-1zM735 556h1v1h-1zM312 629h1v1h-1zM320 588h1v1h-1zM123 623h1v1h-1zM378 618h1v1h-1zM115 666h1v1h-1zM501 569h1v1h-1zM429 555h1v1h-1zM121 703h1v1h-1zM461 665h1v1h-1zM351 671h1v1h-1zM176 588h1v1h-1zM370 596h1v1h-1zM391 630h1v1h-1zM275 562h1v1h-1zM390 548h1v1h-1zM463 621h1v1h-1zM559 619h1v1h-1zM497 603h1v1h-1zM96 634h1v1h-1zM526 546h1v1h-1zM638 535h1v1h-1zM266 660h1v1h-1zM576 542h1v1h-1zM144 699h1v1h-1zM70 705h1v1h-1zM247 648h1v1h-1zM101 711h1v1h-1zM105 671h1v1h-1zM246 698h1v1h-1zM685 539h1v1h-1zM286 604h1v1h-1zM724 619h1v1h-1zM280 565h1v1h-1zM256 644h1v1h-1zM62 610h1v1h-1zM87 685h1v1h-1zM540 631h1v1h-1zM386 555h1v1h-1zM310 550h1v1h-1zM558 567h1v1h-1zM362 685h1v1h-1zM169 705h1v1h-1zM531 541h1v1h-1zM415 544h1v1h-1zM85 701h1v1h-1zM498 604h1v1h-1zM207 643h1v1h-1zM511 632h1v1h-1zM493 655h1v1h-1zM578 631h1v1h-1zM98 596h1v1h-1zM420 621h1v1h-1zM183 678h1v1h-1zM523 658h1v1h-1zM99 636h1v1h-1zM542 546h1v1h-1zM683 611h1v1h-1zM284 597h1v1h-1zM301 691h1v1h-1zM337 674h1v1h-1zM566 572h1v1h-1zM88 708h1v1h-1zM517 608h1v1h-1zM200 644h1v1h-1zM227 703h1v1h-1zM539 551h1v1h-1zM102 618h1v1h-1zM111 616h1v1h-1zM382 597h1v1h-1zM415 641h1v1h-1zM145 615h1v1h-1zM390 605h1v1h-1zM203 613h1v1h-1zM65 623h1v1h-1zM161 670h1v1h-1zM118 596h1v1h-1zM249 644h1v1h-1zM250 658h1v1h-1zM217 632h1v1h-1zM580 526h1v1h-1zM217 609h1v1h-1zM130 705h1v1h-1zM634 619h1v1h-1zM356 598h1v1h-1zM641 520h1v1h-1zM250 624h1v1h-1zM334 634h1v1h-1zM190 706h1v1h-1zM662 623h1v1h-1zM167 596h1v1h-1zM609 621h1v1h-1zM196 632h1v1h-1zM444 586h1v1h-1zM360 607h1v1h-1zM452 569h1v1h-1zM136 634h1v1h-1zM783 596h1v1h-1zM273 618h1v1h-1zM83 635h1v1h-1zM383 675h1v1h-1zM84 599h1v1h-1zM360 602h1v1h-1zM406 556h1v1h-1zM135 602h1v1h-1zM99 721h1v1h-1zM107 711h1v1h-1zM366 582h1v1h-1zM428 647h1v1h-1zM593 534h1v1h-1zM189 570h1v1h-1zM92 620h1v1h-1zM349 605h1v1h-1zM502 603h1v1h-1zM413 549h1v1h-1zM270 616h1v1h-1zM163 694h1v1h-1zM415 576h1v1h-1zM522 619h1v1h-1zM142 701h1v1h-1zM402 508h1v1h-1zM447 557h1v1h-1zM764 524h1v1h-1zM212 655h1v1h-1zM221 586h1v1h-1zM71 639h1v1h-1zM117 678h1v1h-1zM426 668h1v1h-1zM165 612h1v1h-1zM583 621h1v1h-1zM186 638h1v1h-1zM467 641h1v1h-1zM205 560h1v1h-1zM435 673h1v1h-1zM243 652h1v1h-1zM139 636h1v1h-1zM136 610h1v1h-1zM171 612h1v1h-1zM101 674h1v1h-1zM532 614h1v1h-1zM596 590h1v1h-1zM467 551h1v1h-1zM56 702h1v1h-1zM549 562h1v1h-1zM466 664h1v1h-1zM508 562h1v1h-1zM350 676h1v1h-1zM137 655h1v1h-1zM176 661h1v1h-1zM219 614h1v1h-1zM127 663h1v1h-1zM65 619h1v1h-1zM644 523h1v1h-1zM219 605h1v1h-1zM336 694h1v1h-1zM96 706h1v1h-1zM522 552h1v1h-1zM432 628h1v1h-1zM70 657h1v1h-1zM134 593h1v1h-1zM426 494h1v1h-1zM76 589h1v1h-1zM63 683h1v1h-1zM100 590h1v1h-1zM110 708h1v1h-1zM449 661h1v1h-1zM456 624h1v1h-1zM314 566h1v1h-1zM180 697h1v1h-1zM457 606h1v1h-1zM352 612h1v1h-1zM78 591h1v1h-1zM129 584h1v1h-1zM392 588h1v1h-1zM311 621h1v1h-1zM221 611h1v1h-1zM291 635h1v1h-1zM152 607h1v1h-1zM323 582h1v1h-1zM108 691h1v1h-1zM721 576h1v1h-1zM491 628h1v1h-1zM273 695h1v1h-1zM695 587h1v1h-1zM380 596h1v1h-1zM318 618h1v1h-1zM360 631h1v1h-1zM396 610h1v1h-1zM732 569h1v1h-1zM457 673h1v1h-1zM150 621h1v1h-1zM77 584h1v1h-1zM594 612h1v1h-1zM422 587h1v1h-1zM321 657h1v1h-1zM269 596h1v1h-1zM637 595h1v1h-1zM71 634h1v1h-1zM115 625h1v1h-1zM185 662h1v1h-1zM769 619h1v1h-1zM391 556h1v1h-1zM331 582h1v1h-1zM197 656h1v1h-1zM116 670h1v1h-1zM61 603h1v1h-1zM110 626h1v1h-1zM123 687h1v1h-1zM281 591h1v1h-1zM208 668h1v1h-1zM695 534h1v1h-1zM595 643h1v1h-1zM305 573h1v1h-1zM120 666h1v1h-1zM185 578h1v1h-1zM65 686h1v1h-1zM369 557h1v1h-1zM217 666h1v1h-1zM603 577h1v1h-1zM185 666h1v1h-1zM517 573h1v1h-1zM221 604h1v1h-1zM364 584h1v1h-1zM203 656h1v1h-1zM478 488h1v1h-1zM144 680h1v1h-1zM117 649h1v1h-1zM74 653h1v1h-1zM215 663h1v1h-1zM419 610h1v1h-1zM255 681h1v1h-1zM509 607h1v1h-1zM323 648h1v1h-1zM293 623h1v1h-1zM274 586h1v1h-1zM70 715h1v1h-1zM325 636h1v1h-1zM130 577h1v1h-1zM86 682h1v1h-1zM94 621h1v1h-1zM119 630h1v1h-1zM343 601h1v1h-1zM171 593h1v1h-1zM175 655h1v1h-1zM230 651h1v1h-1zM650 621h1v1h-1zM159 661h1v1h-1zM178 627h1v1h-1zM156 617h1v1h-1zM184 611h1v1h-1zM176 645h1v1h-1zM497 668h1v1h-1zM698 441h1v1h-1zM221 585h1v1h-1zM533 547h1v1h-1zM95 713h1v1h-1zM265 651h1v1h-1zM490 611h1v1h-1zM89 627h1v1h-1zM779 513h1v1h-1zM224 699h1v1h-1zM274 577h1v1h-1zM631 447h1v1h-1zM594 532h1v1h-1zM138 610h1v1h-1zM252 654h1v1h-1zM419 514h1v1h-1zM254 636h1v1h-1zM622 641h1v1h-1zM134 692h1v1h-1zM689 580h1v1h-1zM344 591h1v1h-1zM339 642h1v1h-1zM383 559h1v1h-1zM162 671h1v1h-1zM246 574h1v1h-1zM142 627h1v1h-1zM475 532h1v1h-1zM191 658h1v1h-1zM110 643h1v1h-1zM557 625h1v1h-1zM197 636h1v1h-1zM639 534h1v1h-1zM246 598h1v1h-1zM362 575h1v1h-1zM458 620h1v1h-1zM283 653h1v1h-1zM629 573h1v1h-1zM478 547h1v1h-1zM559 566h1v1h-1zM292 529h1v1h-1zM105 610h1v1h-1zM123 597h1v1h-1zM112 618h1v1h-1zM293 600h1v1h-1zM639 562h1v1h-1zM304 558h1v1h-1zM239 650h1v1h-1zM98 618h1v1h-1zM212 651h1v1h-1zM127 697h1v1h-1zM252 575h1v1h-1zM253 576h1v1h-1zM614 637h1v1h-1zM222 593h1v1h-1zM550 576h1v1h-1zM70 679h1v1h-1zM198 667h1v1h-1zM410 515h1v1h-1zM247 641h1v1h-1zM85 697h1v1h-1zM203 615h1v1h-1zM304 560h1v1h-1zM648 617h1v1h-1zM150 672h1v1h-1zM89 652h1v1h-1zM436 652h1v1h-1zM340 667h1v1h-1zM200 684h1v1h-1zM220 587h1v1h-1zM190 634h1v1h-1zM370 519h1v1h-1zM531 552h1v1h-1zM177 567h1v1h-1zM581 631h1v1h-1zM233 547h1v1h-1zM270 600h1v1h-1zM158 650h1v1h-1zM88 603h1v1h-1zM134 584h1v1h-1zM156 695h1v1h-1zM243 635h1v1h-1zM272 645h1v1h-1zM510 525h1v1h-1zM205 693h1v1h-1zM442 583h1v1h-1zM157 632h1v1h-1zM263 553h1v1h-1zM84 701h1v1h-1zM559 623h1v1h-1zM201 648h1v1h-1zM356 582h1v1h-1zM309 635h1v1h-1zM268 592h1v1h-1zM151 662h1v1h-1zM491 589h1v1h-1zM260 602h1v1h-1zM106 676h1v1h-1zM93 654h1v1h-1zM277 691h1v1h-1zM311 669h1v1h-1zM167 629h1v1h-1zM149 697h1v1h-1zM497 649h1v1h-1zM384 618h1v1h-1zM111 597h1v1h-1zM477 536h1v1h-1zM76 618h1v1h-1zM509 615h1v1h-1zM503 644h1v1h-1zM103 662h1v1h-1zM735 625h1v1h-1zM569 620h1v1h-1zM125 622h1v1h-1zM364 597h1v1h-1zM256 575h1v1h-1zM111 575h1v1h-1zM137 661h1v1h-1zM136 619h1v1h-1zM376 666h1v1h-1zM315 657h1v1h-1zM678 520h1v1h-1zM180 659h1v1h-1zM265 572h1v1h-1zM211 658h1v1h-1zM215 579h1v1h-1zM321 580h1v1h-1zM458 633h1v1h-1zM384 683h1v1h-1zM99 630h1v1h-1zM167 665h1v1h-1zM347 518h1v1h-1zM439 570h1v1h-1zM533 608h1v1h-1zM205 552h1v1h-1zM253 573h1v1h-1zM73 616h1v1h-1zM285 588h1v1h-1zM179 665h1v1h-1zM289 562h1v1h-1zM331 543h1v1h-1zM122 677h1v1h-1zM84 704h1v1h-1zM404 563h1v1h-1zM410 548h1v1h-1zM723 483h1v1h-1zM277 684h1v1h-1zM80 576h1v1h-1zM84 597h1v1h-1zM678 615h1v1h-1zM419 634h1v1h-1zM119 703h1v1h-1zM235 638h1v1h-1zM132 688h1v1h-1zM451 668h1v1h-1zM417 553h1v1h-1zM603 638h1v1h-1zM366 636h1v1h-1zM226 679h1v1h-1zM583 550h1v1h-1zM216 600h1v1h-1zM420 552h1v1h-1zM142 645h1v1h-1zM167 604h1v1h-1zM334 582h1v1h-1zM175 597h1v1h-1zM525 636h1v1h-1zM284 626h1v1h-1zM605 572h1v1h-1zM332 650h1v1h-1zM317 589h1v1h-1zM278 613h1v1h-1zM131 616h1v1h-1zM200 606h1v1h-1zM564 609h1v1h-1zM379 553h1v1h-1zM446 636h1v1h-1zM232 631h1v1h-1zM135 591h1v1h-1zM466 651h1v1h-1zM233 597h1v1h-1zM453 650h1v1h-1zM80 598h1v1h-1zM201 587h1v1h-1zM362 631h1v1h-1zM609 622h1v1h-1zM134 674h1v1h-1zM705 545h1v1h-1zM378 506h1v1h-1zM134 627h1v1h-1zM60 696h1v1h-1zM606 545h1v1h-1zM378 565h1v1h-1zM410 622h1v1h-1zM231 665h1v1h-1zM88 641h1v1h-1zM263 600h1v1h-1zM358 617h1v1h-1zM167 628h1v1h-1zM655 555h1v1h-1zM449 549h1v1h-1zM61 722h1v1h-1zM175 612h1v1h-1zM569 652h1v1h-1zM428 643h1v1h-1zM472 574h1v1h-1zM129 693h1v1h-1zM547 575h1v1h-1zM367 576h1v1h-1zM226 613h1v1h-1zM383 568h1v1h-1zM153 631h1v1h-1zM566 589h1v1h-1zM85 589h1v1h-1zM163 662h1v1h-1zM407 663h1v1h-1zM233 627h1v1h-1zM550 584h1v1h-1zM494 546h1v1h-1zM381 558h1v1h-1zM205 663h1v1h-1zM243 535h1v1h-1zM192 630h1v1h-1zM183 682h1v1h-1zM59 638h1v1h-1zM159 681h1v1h-1zM392 636h1v1h-1zM298 601h1v1h-1zM191 617h1v1h-1zM189 712h1v1h-1zM125 638h1v1h-1zM84 650h1v1h-1zM115 660h1v1h-1zM344 640h1v1h-1zM607 563h1v1h-1zM386 575h1v1h-1zM198 557h1v1h-1zM309 581h1v1h-1zM107 648h1v1h-1zM86 590h1v1h-1zM78 633h1v1h-1zM311 666h1v1h-1zM323 695h1v1h-1zM115 701h1v1h-1zM626 452h1v1h-1zM109 659h1v1h-1zM280 640h1v1h-1zM361 555h1v1h-1zM66 607h1v1h-1zM164 602h1v1h-1zM292 595h1v1h-1zM379 654h1v1h-1zM382 546h1v1h-1zM369 572h1v1h-1zM82 615h1v1h-1zM76 718h1v1h-1zM525 609h1v1h-1zM112 681h1v1h-1zM206 634h1v1h-1zM506 595h1v1h-1zM71 663h1v1h-1zM523 574h1v1h-1zM364 576h1v1h-1zM218 569h1v1h-1zM151 647h1v1h-1zM286 532h1v1h-1zM491 551h1v1h-1zM135 717h1v1h-1zM154 608h1v1h-1zM275 697h1v1h-1zM479 637h1v1h-1zM232 579h1v1h-1zM229 661h1v1h-1zM661 634h1v1h-1zM294 677h1v1h-1zM459 540h1v1h-1zM377 635h1v1h-1zM301 651h1v1h-1zM241 582h1v1h-1zM364 563h1v1h-1zM499 643h1v1h-1zM111 710h1v1h-1zM164 591h1v1h-1zM138 589h1v1h-1zM479 481h1v1h-1zM188 689h1v1h-1zM248 652h1v1h-1zM282 569h1v1h-1zM650 524h1v1h-1zM56 574h1v1h-1zM128 630h1v1h-1zM534 647h1v1h-1zM252 632h1v1h-1zM208 603h1v1h-1zM628 477h1v1h-1zM96 646h1v1h-1zM60 699h1v1h-1zM577 626h1v1h-1zM488 580h1v1h-1zM295 562h1v1h-1zM162 680h1v1h-1zM452 629h1v1h-1zM116 609h1v1h-1zM237 648h1v1h-1zM122 643h1v1h-1zM227 673h1v1h-1zM57 635h1v1h-1zM254 697h1v1h-1zM250 696h1v1h-1zM706 617h1v1h-1zM214 599h1v1h-1zM292 673h1v1h-1zM114 669h1v1h-1zM169 580h1v1h-1zM146 678h1v1h-1zM684 619h1v1h-1zM104 683h1v1h-1zM357 510h1v1h-1zM498 541h1v1h-1zM626 525h1v1h-1zM398 616h1v1h-1zM126 715h1v1h-1zM594 520h1v1h-1zM283 627h1v1h-1zM290 607h1v1h-1zM560 624h1v1h-1zM61 663h1v1h-1zM408 564h1v1h-1zM439 660h1v1h-1zM375 546h1v1h-1zM131 680h1v1h-1zM585 549h1v1h-1zM151 586h1v1h-1zM188 625h1v1h-1zM501 632h1v1h-1zM595 615h1v1h-1zM161 614h1v1h-1zM264 641h1v1h-1zM515 620h1v1h-1zM295 559h1v1h-1zM146 686h1v1h-1zM210 600h1v1h-1zM350 664h1v1h-1zM411 557h1v1h-1zM181 679h1v1h-1zM130 592h1v1h-1zM454 530h1v1h-1zM179 590h1v1h-1zM153 562h1v1h-1zM172 693h1v1h-1zM147 662h1v1h-1zM107 589h1v1h-1zM217 691h1v1h-1zM129 643h1v1h-1zM360 620h1v1h-1zM94 664h1v1h-1zM203 682h1v1h-1zM636 615h1v1h-1zM253 677h1v1h-1zM559 629h1v1h-1zM146 703h1v1h-1zM458 580h1v1h-1zM88 607h1v1h-1zM640 516h1v1h-1zM660 646h1v1h-1zM389 632h1v1h-1zM135 700h1v1h-1zM436 620h1v1h-1zM474 500h1v1h-1zM364 604h1v1h-1zM451 568h1v1h-1zM157 599h1v1h-1zM454 580h1v1h-1zM145 598h1v1h-1zM278 564h1v1h-1zM222 655h1v1h-1zM139 696h1v1h-1zM159 686h1v1h-1zM551 532h1v1h-1zM78 628h1v1h-1zM270 584h1v1h-1zM266 680h1v1h-1zM98 587h1v1h-1zM87 708h1v1h-1zM242 620h1v1h-1zM204 585h1v1h-1zM159 673h1v1h-1zM158 617h1v1h-1zM146 626h1v1h-1zM354 593h1v1h-1zM693 625h1v1h-1zM180 636h1v1h-1zM224 695h1v1h-1zM393 633h1v1h-1zM181 696h1v1h-1zM104 593h1v1h-1zM361 645h1v1h-1zM202 672h1v1h-1zM56 606h1v1h-1zM190 580h1v1h-1zM545 596h1v1h-1zM75 604h1v1h-1zM559 587h1v1h-1zM340 637h1v1h-1zM499 565h1v1h-1zM308 566h1v1h-1zM402 666h1v1h-1zM553 561h1v1h-1zM122 584h1v1h-1zM97 585h1v1h-1zM314 613h1v1h-1zM264 570h1v1h-1zM286 687h1v1h-1zM205 566h1v1h-1zM700 594h1v1h-1zM333 578h1v1h-1zM337 627h1v1h-1zM65 640h1v1h-1zM167 664h1v1h-1zM169 656h1v1h-1zM742 593h1v1h-1zM108 681h1v1h-1zM278 689h1v1h-1zM417 584h1v1h-1zM344 642h1v1h-1zM439 549h1v1h-1zM206 627h1v1h-1zM119 696h1v1h-1zM146 685h1v1h-1zM302 677h1v1h-1zM285 589h1v1h-1zM227 671h1v1h-1zM592 573h1v1h-1zM224 637h1v1h-1zM139 672h1v1h-1zM332 572h1v1h-1zM320 608h1v1h-1zM458 637h1v1h-1zM308 669h1v1h-1zM57 686h1v1h-1zM266 675h1v1h-1zM127 628h1v1h-1zM149 613h1v1h-1zM446 592h1v1h-1zM662 557h1v1h-1zM538 561h1v1h-1zM149 640h1v1h-1zM237 549h1v1h-1zM526 493h1v1h-1zM507 669h1v1h-1zM77 658h1v1h-1zM168 693h1v1h-1zM326 601h1v1h-1zM132 620h1v1h-1zM62 689h1v1h-1zM143 633h1v1h-1zM297 595h1v1h-1zM405 615h1v1h-1zM422 639h1v1h-1zM311 674h1v1h-1zM330 579h1v1h-1zM286 682h1v1h-1zM465 645h1v1h-1zM362 557h1v1h-1zM383 675h1v1h-1zM572 637h1v1h-1zM100 673h1v1h-1zM69 714h1v1h-1zM292 688h1v1h-1zM247 600h1v1h-1zM579 645h1v1h-1zM181 588h1v1h-1zM379 690h1v1h-1zM391 648h1v1h-1zM150 553h1v1h-1zM58 586h1v1h-1zM233 636h1v1h-1zM135 654h1v1h-1z"/>
<path fill="#00ffff" d="M307 712h1v1h-1zM506 668h1v1h-1zM134 705h1v1h-1zM616 678h1v1h-1zM143 705h1v1h-1zM111 734h1v1h-1zM472 726h1v1h-1zM136 622h1v1h-1zM580 474h1v1h-1zM172 717h1v1h-1zM91 772h1v1h-1zM367 641h1v1h-1zM62 700h1v1h-1zM101 702h1v1h-1zM345 677h1v1h-1zM453 658h1v1h-1zM297 586h1v1h-1zM527 674h1v1h-1zM128 718h1v1h-1zM500 666h1v1h-1zM267 594h1v1h-1zM552 684h1v1h-1zM114 713h1v1h-1zM317 634h1v1h-1zM94 605h1v1h-1zM128 711h1v1h-1zM216 745h1v1h-1zM326 679h1v1h-1zM331 654h1v1h-1zM162 606h1v1h-1zM192 672h1v1h-1zM694 651h1v1h-1zM66 789h1v1h-1zM240 693h1v1h-1zM541 570h1v1h-1zM409 743h1v1h-1zM340 740h1v1h-1zM122 608h1v1h-1zM167 698h1v1h-1zM762 660h1v1h-1zM334 732h1v1h-1zM184 782h1v1h-1zM634 689h1v1h-1zM514 690h1v1h-1zM463 558h1v1h-1zM157 703h1v1h-1zM243 720h1v1h-1zM539 705h1v1h-1zM181 752h1v1h-1zM688 661h1v1h-1zM249 709h1v1h-1zM298 645h1v1h-1zM471 506h1v1h-1zM96 705h1v1h-1zM368 621h1v1h-1zM356 704h1v1h-1zM127 622h1v1h-1zM128 700h1v1h-1zM67 734h1v1h-1zM224 688h1v1h-1zM382 674h1v1h-1zM86 756h1v1h-1zM304 668h1v1h-1zM130 686h1v1h-1zM517 629h1v1h-1zM84 750h1v1h-1zM57 779h1v1h-1zM398 671h1v1h-1zM216 779h1v1h-1zM610 661h1v1h-1zM234 591h1v1h-1zM491 723h1v1h-1zM283 638h1v1h-1zM289 635h1v1h-1zM235 589h1v1h-1zM420 662h1v1h-1zM68 790h1v1h-1zM509 635h1v1h-1zM394 679h1v1h-1zM445 689h1v1h-1zM99 650h1v1h-1zM434 719h1v1h-1zM304 719h1v1h-1zM434 634h1v1h-1zM309 715h1v1h-1zM586 670h1v1h-1zM508 673h1v1h-1zM336 730h1v1h-1zM740 592h1v1h-1zM306 714h1v1h-1zM213 605h1v1h-1zM557 713h1v1h-1zM136 632h1v1h-1zM473 699h1v1h-1zM323 703h1v1h-1zM729 681h1v1h-1zM75 727h1v1h-1zM188 709h1v1h-1zM627 663h1v1h-1zM343 715h1v1h-1zM147 691h1v1h-1zM423 615h1v1h-1zM291 707h1v1h-1zM337 747h1v1h-1zM130 703h1v1h-1zM67 699h1v1h-1zM604 706h1v1h-1zM397 677h1v1h-1zM698 660h1v1h-1zM293 706h1v1h-1zM175 712h1v1h-1zM76 792h1v1h-1zM328 682h1v1h-1zM482 686h1v1h-1zM630 549h1v1h-1zM229 669h1v1h-1zM175 670h1v1h-1zM160 613h1v1h-1zM644 575h1v1h-1zM406 624h1v1h-1zM314 712h1v1h-1zM622 601h1v1h-1zM455 701h1v1h-1zM314 583h1v1h-1zM476 673h1v1h-1zM397 737h1v1h-1zM459 713h1v1h-1zM207 658h1v1h-1zM424 683h1v1h-1zM125 597h1v1h-1zM73 694h1v1h-1zM295 713h1v1h-1zM469 629h1v1h-1zM153 687h1v1h-1zM584 589h1v1h-1zM276 562h1v1h-1zM397 669h1v1h-1zM564 675h1v1h-1zM498 560h1v1h-1zM388 588h1v1h-1zM179 727h1v1h-1zM132 603h1v1h-1zM337 723h1v1h-1zM349 734h1v1h-1zM354 702h1v1h-1zM239 658h1v1h-1zM132 578h1v1h-1zM630 666h1v1h-1zM405 690h1v1h-1zM415 671h1v1h-1zM65 606h1v1h-1zM313 670h1v1h-1zM313 547h1v1h-1zM87 754h1v1h-1zM150 642h1v1h-1zM123 713h1v1h-1zM366 672h1v1h-1zM566 629h1v1h-1zM374 713h1v1h-1zM203 695h1v1h-1zM541 627h1v1h-1zM324 710h1v1h-1zM518 614h1v1h-1zM343 678h1v1h-1zM124 621h1v1h-1zM255 653h1v1h-1zM174 715h1v1h-1zM196 702h1v1h-1zM78 679h1v1h-1zM475 729h1v1h-1zM332 737h1v1h-1zM199 584h1v1h-1zM431 616h1v1h-1zM279 568h1v1h-1zM86 657h1v1h-1zM502 691h1v1h-1zM506 615h1v1h-1zM326 700h1v1h-1zM384 615h1v1h-1zM330 633h1v1h-1zM184 655h1v1h-1zM78 705h1v1h-1zM386 678h1v1h-1zM181 613h1v1h-1zM453 701h1v1h-1zM194 741h1v1h-1zM233 739h1v1h-1zM602 587h1v1h-1zM102 614h1v1h-1zM173 779h1v1h-1zM416 716h1v1h-1zM255 758h1v1h-1zM562 722h1v1h-1zM108 671h1v1h-1zM62 805h1v1h-1zM498 686h1v1h-1zM122 714h1v1h-1zM182 760h1v1h-1zM141 700h1v1h-1zM259 713h1v1h-1zM605 645h1v1h-1zM287 713h1v1h-1zM439 628h1v1h-1zM122 616h1v1h-1zM315 695h1v1h-1zM152 636h1v1h-1zM151 776h1v1h-1zM193 734h1v1h-1zM233 711h1v1h-1zM434 694h1v1h-1zM98 750h1v1h-1zM171 600h1v1h-1zM700 692h1v1h-1zM220 602h1v1h-1zM63 726h1v1h-1zM564 612h1v1h-1zM57 643h1v1h-1zM229 716h1v1h-1zM430 570h1v1h-1zM651 529h1v1h-1zM588 675h1v1h-1zM643 678h1v1h-1zM350 569h1v1h-1zM694 594h1v1h-1zM158 745h1v1h-1zM200 644h1v1h-1zM389 575h1v1h-1zM372 711h1v1h-1zM517 707h1v1h-1zM107 636h1v1h-1zM226 641h1v1h-1zM371 681h1v1h-1zM92 613h1v1h-1zM297 690h1v1h-1zM572 670h1v1h-1zM65 662h1v1h-1zM530 706h1v1h-1zM435 655h1v1h-1zM256 581h1v1h-1zM150 686h1v1h-1zM484 669h1v1h-1zM218 734h1v1h-1zM372 580h1v1h-1zM110 773h1v1h-1zM467 666h1v1h-1zM618 618h1v1h-1zM622 661h1v1h-1zM723 647h1v1h-1zM81 758h1v1h-1zM509 661h1v1h-1zM162 767h1v1h-1zM100 774h1v1h-1zM494 667h1v1h-1zM592 671h1v1h-1zM83 795h1v1h-1zM146 710h1v1h-1zM280 677h1v1h-1zM561 702h1v1h-1zM274 652h1v1h-1zM74 743h1v1h-1zM444 703h1v1h-1zM670 629h1v1h-1zM124 716h1v1h-1zM520 678h1v1h-1zM675 706h1v1h-1zM250 606h1v1h-1zM529 662h1v1h-1zM377 668h1v1h-1zM719 585h1v1h-1zM402 648h1v1h-1zM185 710h1v1h-1zM426 713h1v1h-1zM206 755h1v1h-1zM216 626h1v1h-1zM56 732h1v1h-1zM89 679h1v1h-1zM135 709h1v1h-1zM399 635h1v1h-1zM305 684h1v1h-1zM239 754h1v1h-1zM361 732h1v1h-1zM199 716h1v1h-1zM204 761h1v1h-1zM361 612h1v1h-1zM457 710h1v1h-1zM450 594h1v1h-1zM326 644h1v1h-1zM718 560h1v1h-1zM750 546h1v1h-1zM635 680h1v1h-1zM188 701h1v1h-1zM452 561h1v1h-1zM101 711h1v1h-1zM754 638h1v1h-1zM336 675h1v1h-1zM84 607h1v1h-1zM109 756h1v1h-1zM385 699h1v1h-1zM408 567h1v1h-1zM225 709h1v1h-1zM265 692h1v1h-1zM508 568h1v1h-1zM485 692h1v1h-1zM463 667h1v1h-1zM229 620h1v1h-1zM214 600h1v1h-1zM393 679h1v1h-1zM95 702h1v1h-1zM405 711h1v1h-1zM413 692h1v1h-1zM472 652h1v1h-1zM164 697h1v1h-1zM211 629h1v1h-1zM162 719h1v1h-1zM262 607h1v1h-1zM378 711h1v1h-1zM270 700h1v1h-1zM575 645h1v1h-1zM345 697h1v1h-1zM495 647h1v1h-1zM684 603h1v1h-1zM496 606h1v1h-1zM150 660h1v1h-1zM210 604h1v1h-1zM75 811h1v1h-1zM242 696h1v1h-1zM264 694h1v1h-1zM201 633h1v1h-1zM228 668h1v1h-1zM144 710h1v1h-1zM518 705h1v1h-1zM237 753h1v1h-1zM63 699h1v1h-1zM264 628h1v1h-1zM223 741h1v1h-1zM133 695h1v1h-1zM422 565h1v1h-1zM248 685h1v1h-1zM483 581h1v1h-1zM363 688h1v1h-1zM674 658h1v1h-1zM208 642h1v1h-1zM71 648h1v1h-1zM135 782h1v1h-1zM464 692h1v1h-1zM140 722h1v1h-1zM350 686h1v1h-1zM103 708h1v1h-1zM550 673h1v1h-1zM233 697h1v1h-1zM186 694h1v1h-1zM585 481h1v1h-1zM424 595h1v1h-1zM356 641h1v1h-1zM604 637h1v1h-1zM505 697h1v1h-1zM58 766h1v1h-1zM609 658h1v1h-1zM141 693h1v1h-1zM441 664h1v1h-1zM190 712h1v1h-1zM188 716h1v1h-1zM253 661h1v1h-1zM57 766h1v1h-1zM539 664h1v1h-1zM173 709h1v1h-1zM378 678h1v1h-1zM117 650h1v1h-1zM96 762h1v1h-1zM62 767h1v1h-1zM287 576h1v1h-1zM249 670h1v1h-1zM436 658h1v1h-1zM257 734h1v1h-1zM299 619h1v1h-1zM335 707h1v1h-1zM117 770h1v1h-1zM227 678h1v1h-1zM529 648h1v1h-1zM743 610h1v1h-1zM288 695h1v1h-1zM195 712h1v1h-1zM548 694h1v1h-1zM322 726h1v1h-1zM72 736h1v1h-1zM125 594h1v1h-1zM381 732h1v1h-1zM107 613h1v1h-1zM311 667h1v1h-1zM693 589h1v1h-1zM305 642h1v1h-1zM269 738h1v1h-1zM500 719h1v1h-1zM309 740h1v1h-1zM533 699h1v1h-1zM60 608h1v1h-1zM538 554h1v1h-1zM127 735h1v1h-1zM151 755h1v1h-1zM334 741h1v1h-1zM410 675h1v1h-1zM125 735h1v1h-1zM494 671h1v1h-1zM284 588h1v1h-1zM459 644h1v1h-1zM219 694h1v1h-1zM218 711h1v1h-1zM314 680h1v1h-1zM393 704h1v1h-1zM474 627h1v1h-1zM208 614h1v1h-1zM366 574h1v1h-1zM169 711h1v1h-1zM423 711h1v1h-1zM242 673h1v1h-1zM630 660h1v1h-1zM443 680h1v1h-1zM87 779h1v1h-1zM380 718h1v1h-1zM230 598h1v1h-1zM202 765h1v1h-1zM147 609h1v1h-1zM422 624h1v1h-1zM548 643h1v1h-1zM264 698h1v1h-1zM294 582h1v1h-1zM206 716h1v1h-1zM509 689h1v1h-1zM737 542h1v1h-1zM268 729h1v1h-1zM267 765h1v1h-1zM138 776h1v1h-1zM183 603h1v1h-1zM237 670h1v1h-1zM248 716h1v1h-1zM127 781h1v1h-1zM219 758h1v1h-1zM80 795h1v1h-1zM181 708h1v1h-1zM391 694h1v1h-1zM606 511h1v1h-1zM150 700h1v1h-1zM421 658h1v1h-1zM156 714h1v1h-1zM663 709h1v1h-1zM165 670h1v1h-1zM75 659h1v1h-1zM664 629h1v1h-1zM213 683h1v1h-1zM146 630h1v1h-1zM270 642h1v1h-1zM539 562h1v1h-1zM237 590h1v1h-1zM272 592h1v1h-1zM388 731h1v1h-1zM64 711h1v1h-1zM606 617h1v1h-1zM430 655h1v1h-1zM349 685h1v1h-1zM218 696h1v1h-1zM699 675h1v1h-1zM86 764h1v1h-1zM57 757h1v1h-1zM351 637h1v1h-1zM405 692h1v1h-1zM120 676h1v1h-1zM539 695h1v1h-1zM260 607h1v1h-1zM207 676h1v1h-1zM432 711h1v1h-1zM244 726h1v1h-1zM125 702h1v1h-1zM256 636h1v1h-1zM71 623h1v1h-1zM194 742h1v1h-1zM345 702h1v1h-1zM89 748h1v1h-1zM260 644h1v1h-1zM284 588h1v1h-1zM69 789h1v1h-1zM147 766h1v1h-1zM74 721h1v1h-1zM306 684h1v1h-1zM380 655h1v1h-1zM56 642h1v1h-1zM335 756h1v1h-1zM557 653h1v1h-1zM73 726h1v1h-1zM350 666h1v1h-1zM200 620h1v1h-1zM116 661h1v1h-1zM564 724h1v1h-1zM195 714h1v1h-1zM541 704h1v1h-1zM600 650h1v1h-1zM166 567h1v1h-1zM567 657h1v1h-1zM609 694h1v1h-1zM579 650h1v1h-1zM377 579h1v1h-1zM56 615h1v1h-1zM311 602h1v1h-1zM550 564h1v1h-1zM545 669h1v1h-1zM585 639h1v1h-1zM304 686h1v1h-1zM99 694h1v1h-1zM211 694h1v1h-1zM189 652h1v1h-1zM370 685h1v1h-1zM174 703h1v1h-1zM328 678h1v1h-1zM194 652h1v1h-1zM275 615h1v1h-1zM381 531h1v1h-1zM513 669h1v1h-1zM72 709h1v1h-1zM268 704h1v1h-1zM202 741h1v1h-1zM373 633h1v1h-1zM435 541h1v1h-1zM430 580h1v1h-1zM122 730h1v1h-1zM119 762h1v1h-1zM559 684h1v1h-1zM196 622h1v1h-1zM419 695h1v1h-1zM62 758h1v1h-1zM353 735h1v1h-1zM157 728h1v1h-1zM399 656h1v1h-1zM90 736h1v1h-1zM578 551h1v1h-1zM412 698h1v1h-1zM369 740h1v1h-1zM280 598h1v1h-1zM494 715h1v1h-1zM261 697h1v1h-1zM380 643h1v1h-1zM237 720h1v1h-1zM60 687h1v1h-1zM273 746h1v1h-1zM501 602h1v1h-1zM381 694h1v1h-1zM92 733h1v1h-1zM68 611h1v1h-1zM130 720h1v1h-1zM371 671h1v1h-1zM193 701h1v1h-1zM164 683h1v1h-1zM567 679h1v1h-1zM59 786h1v1h-1zM517 560h1v1h-1zM214 599h1v1h-1zM507 552h1v1h-1zM185 650h1v1h-1zM305 725h1v1h-1zM116 778h1v1h-1zM179 717h1v1h-1zM384 726h1v1h-1zM406 563h1v1h-1zM128 638h1v1h-1zM380 722h1v1h-1zM717 540h1v1h-1zM358 686h1v1h-1zM180 732h1v1h-1zM408 696h1v1h-1zM345 651h1v1h-1zM393 700h1v1h-1zM532 491h1v1h-1zM642 693h1v1h-1zM121 713h1v1h-1zM163 777h1v1h-1zM111 620h1v1h-1zM772 486h1v1h-1zM729 636h1v1h-1zM461 703h1v1h-1zM370 665h1v1h-1zM123 753h1v1h-1zM192 718h1v1h-1zM111 749h1v1h-1zM220 767h1v1h-1zM96 772h1v1h-1zM63 677h1v1h-1zM79 687h1v1h-1zM263 583h1v1h-1zM125 740h1v1h-1zM79 622h1v1h-1zM461 718h1v1h-1zM469 563h1v1h-1zM655 687h1v1h-1zM502 675h1v1h-1zM662 604h1v1h-1zM389 606h1v1h-1zM312 695h1v1h-1zM248 585h1v1h-1zM206 694h1v1h-1zM61 783h1v1h-1zM429 546h1v1h-1zM199 637h1v1h-1zM445 680h1v1h-1zM652 620h1v1h-1zM491 685h1v1h-1zM299 616h1v1h-1zM329 705h1v1h-1zM582 655h1v1h-1zM161 604h1v1h-1zM347 698h1v1h-1zM352 709h1v1h-1zM357 582h1v1h-1zM185 698h1v1h-1zM271 707h1v1h-1zM298 740h1v1h-1zM492 575h1v1h-1zM689 652h1v1h-1zM77 814h1v1h-1zM497 707h1v1h-1zM287 573h1v1h-1zM384 716h1v1h-1zM319 703h1v1h-1zM503 666h1v1h-1zM244 594h1v1h-1zM239 713h1v1h-1zM324 686h1v1h-1zM698 591h1v1h-1zM252 697h1v1h-1zM253 663h1v1h-1zM299 723h1v1h-1zM773 671h1v1h-1zM124 663h1v1h-1zM354 665h1v1h-1zM361 736h1v1h-1zM586 659h1v1h-1zM214 654h1v1h-1zM365 734h1v1h-1zM167 787h1v1h-1zM234 743h1v1h-1zM87 680h1v1h-1zM180 611h1v1h-1zM235 573h1v1h-1zM189 780h1v1h-1zM248 660h1v1h-1zM184 770h1v1h-1zM168 681h1v1h-1zM211 622h1v1h-1zM401 604h1v1h-1zM369 613h1v1h-1zM720 702h1v1h-1zM114 687h1v1h-1zM505 656h1v1h-1zM89 632h1v1h-1zM155 682h1v1h-1zM62 770h1v1h-1zM295 705h1v1h-1zM60 618h1v1h-1zM82 749h1v1h-1zM384 627h1v1h-1zM386 606h1v1h-1zM95 750h1v1h-1zM368 729h1v1h-1zM255 701h1v1h-1zM563 498h1v1h-1zM340 704h1v1h-1zM310 701h1v1h-1zM753 623h1v1h-1zM178 710h1v1h-1zM269 674h1v1h-1zM477 675h1v1h-1zM439 680h1v1h-1zM72 798h1v1h-1zM60 655h1v1h-1zM180 712h1v1h-1zM702 645h1v1h-1zM82 774h1v1h-1zM63 653h1v1h-1zM623 659h1v1h-1zM115 638h1v1h-1zM198 722h1v1h-1zM557 553h1v1h-1zM239 741h1v1h-1zM73 775h1v1h-1zM249 566h1v1h-1zM443 529h1v1h-1zM124 717h1v1h-1zM173 738h1v1h-1zM207 761h1v1h-1zM59 754h1v1h-1zM413 619h1v1h-1zM94 792h1v1h-1zM150 715h1v1h-1zM265 674h1v1h-1zM465 710h1v1h-1zM90 763h1v1h-1zM694 655h1v1h-1zM298 718h1v1h-1zM127 708h1v1h-1zM132 761h1v1h-1zM317 635h1v1h-1zM93 772h1v1h-1zM125 719h1v1h-1zM672 638h1v1h-1zM569 698h1v1h-1zM365 580h1v1h-1zM457 677h1v1h-1zM102 664h1v1h-1zM178 688h1v1h-1zM61 759h1v1h-1zM343 572h1v1h-1zM57 690h1v1h-1zM100 679h1v1h-1zM772 533h1v1h-1zM93 704h1v1h-1zM733 640h1v1h-1zM318 693h1v1h-1zM288 609h1v1h-1zM110 717h1v1h-1zM237 626h1v1h-1zM215 673h1v1h-1zM418 528h1v1h-1zM726 605h1v1h-1zM202 739h1v1h-1zM65 695h1v1h-1zM690 657h1v1h-1zM286 639h1v1h-1zM246 726h1v1h-1zM466 709h1v1h-1zM381 593h1v1h-1zM317 721h1v1h-1zM115 716h1v1h-1zM498 579h1v1h-1zM163 602h1v1h-1zM359 692h1v1h-1zM137 739h1v1h-1zM157 731h1v1h-1zM371 587h1v1h-1zM455 635h1v1h-1zM703 631h1v1h-1zM409 667h1v1h-1zM378 723h1v1h-1zM354 570h1v1h-1zM184 746h1v1h-1zM615 681h1v1h-1zM343 728h1v1h-1zM77 780h1v1h-1zM282 742h1v1h-1zM210 663h1v1h-1zM123 751h1v1h-1zM415 725h1v1h-1zM506 660h1v1h-1zM594 545h1v1h-1zM568 660h1v1h-1zM737 653h1v1h-1zM138 728h1v1h-1zM336 733h1v1h-1zM244 752h1v1h-1zM441 681h1v1h-1zM414 692h1v1h-1zM86 594h1v1h-1zM178 709h1v1h-1zM151 580h1v1h-1zM85 609h1v1h-1zM176 668h1v1h-1zM284 679h1v1h-1zM195 621h1v1h-1zM120 733h1v1h-1zM501 671h1v1h-1zM82 623h1v1h-1zM163 707h1v1h-1zM410 661h1v1h-1zM243 751h1v1h-1zM384 675h1v1h-1zM88 721h1v1h-1zM644 574h1v1h-1zM237 746h1v1h-1zM522 654h1v1h-1zM249 693h1v1h-1zM526 600h1v1h-1zM68 660h1v1h-1zM179 722h1v1h-1zM756 533h1v1h-1zM86 744h1v1h-1zM547 688h1v1h-1zM229 698h1v1h-1zM285 743h1v1h-1zM182 746h1v1h-1zM214 758h1v1h-1zM731 600h1v1h-1zM276 744h1v1h-1zM115 772h1v1h-1zM467 677h1v1h-1zM148 743h1v1h-1zM315 683h1v1h-1zM486 685h1v1h-1zM270 754h1v1h-1zM95 624h1v1h-1zM444 692h1v1h-1zM630 701h1v1h-1zM405 687h1v1h-1zM639 623h1v1h-1zM276 707h1v1h-1zM144 625h1v1h-1zM206 760h1v1h-1zM496 698h1v1h-1zM643 688h1v1h-1zM174 669h1v1h-1zM519 703h1v1h-1zM466 709h1v1h-1zM154 703h1v1h-1zM520 692h1v1h-1zM251 713h1v1h-1zM117 619h1v1h-1zM331 651h1v1h-1zM167 615h1v1h-1zM317 603h1v1h-1zM672 535h1v1h-1zM142 706h1v1h-1zM325 734h1v1h-1zM302 655h1v1h-1zM128 608h1v1h-1zM360 697h1v1h-1zM165 747h1v1h-1zM605 650h1v1h-1zM550 710h1v1h-1zM312 586h1v1h-1zM163 597h1v1h-1zM116 728h1v1h-1zM156 779h1v1h-1zM310 674h1v1h-1zM345 576h1v1h-1zM113 651h1v1h-1zM457 590h1v1h-1zM287 707h1v1h-1zM709 693h1v1h-1zM238 698h1v1h-1zM274 590h1v1h-1zM491 616h1v1h-1zM246 762h1v1h-1zM484 550h1v1h-1zM317 681h1v1h-1zM105 787h1v1h-1zM602 586h1v1h-1zM596 648h1v1h-1zM109 757h1v1h-1zM205 680h1v1h-1zM334 605h1v1h-1zM100 703h1v1h-1zM242 715h1v1h-1zM83 721h1v1h-1zM313 753h1v1h-1zM285 662h1v1h-1zM633 572h1v1h-1zM503 676h1v1h-1zM175 717h1v1h-1zM408 714h1v1h-1zM676 562h1v1h-1zM110 758h1v1h-1zM313 664h1v1h-1zM117 721h1v1h-1zM167 738h1v1h-1zM291 738h1v1h-1zM58 775h1v1h-1zM284 673h1v1h-1zM188 703h1v1h-1zM81 765h1v1h-1zM313 722h1v1h-1zM142 623h1v1h-1zM142 722h1v1h-1zM651 612h1v1h-1zM260 611h1v1h-1zM322 634h1v1h-1zM98 750h1v1h-1zM667 544h1v1h-1zM346 640h1v1h-1zM187 663h1v1h-1zM396 577h1v1h-1zM383 680h1v1h-1zM287 704h1v1h-1zM254 757h1v1h-1zM95 718h1v1h-1zM466 728h1v1h-1zM71 699h1v1h-1zM82 679h1v1h-1zM370 705h1v1h-1zM568 550h1v1h-1zM596 683h1v1h-1zM152 749h1v1h-1zM512 670h1v1h-1zM134 719h1v1h-1zM138 750h1v1h-1zM274 671h1v1h-1zM339 722h1v1h-1zM313 688h1v1h-1zM615 563h1v1h-1zM293 706h1v1h-1zM221 636h1v1h-1zM274 709h1v1h-1zM135 778h1v1h-1zM437 727h1v1h-1zM132 752h1v1h-1z"/>
<rect x="51" y="865" width="4" height="1" fill="#6e6e6e"/>
<rect x="51" y="829" width="4" height="1" fill="#474747"/>
<rect x="51" y="792" width="4" height="1" fill="#6e6e6e"/>
<rect x="51" y="755" width="4" height="1" fill="#474747"/>
<rect x="51" y="719" width="4" height="1" fill="#6e6e6e"/>
<rect x="51" y="682" width="4" height="1" fill="#474747"/>
<rect x="51" y="645" width="4" height="1" fill="#6e6e6e"/>
<rect x="51" y="609" width="4" height="1" fill="#474747"/>
<rect x="51" y="572" width="4" height="1" fill="#6e6e6e"/>
<rect x="51" y="535" width="4" height="1" fill="#474747"/>
<rect x="51" y="499" width="4" height="1" fill="#6e6e6e"/>
<rect x="51" y="462" width="4" height="1" fill="#474747"/>
<rect x="51" y="426" width="4" height="1" fill="#6e6e6e"/>
<rect x="51" y="389" width="4" height="1" fill="#474747"/>
<rect x="51" y="352" width="4" height="1" fill="#6e6e6e"/>
<rect x="51" y="316" width="4" height="1" fill="#474747"/>
<rect x="51" y="279" width="4" height="1" fill="#6e6e6e"/>
<rect x="51" y="242" width="4" height="1" fill="#474747"/>
<rect x="51" y="206" width="4" height="1" fill="#6e6e6e"/>
<rect x="51" y="169" width="4" height="1" fill="#474747"/>
<rect x="55" y="867" width="1" height="2" fill="#777"/>
<rect x="92" y="867" width="1" height="2" fill="#777"/>
<rect x="130" y="867" width="1" height="2" fill="#777"/>
<rect x="167" y="867" width="1" height="2" fill="#777"/>
<rect x="205" y="867" width="1" height="2" fill="#777"/>
<rect x="243" y="867" width="1" height="2" fill="#777"/>
<rect x="280" y="867" width="1" height="2" fill="#777"/>
<rect x="318" y="867" width="1" height="2" fill="#777"/>
<rect x="355" y="867" width="1" height="2" fill="#777"/>
<rect x="393" y="867" width="1" height="2" fill="#777"/>
<rect x="431" y="867" width="1" height="2" fill="#777"/>
<rect x="468" y="867" width="1" height="2" fill="#777"/>
<rect x="506" y="867" width="1" height="2" fill="#777"/>
<rect x="543" y="867" width="1" height="2" fill="#777"/>
<rect x="581" y="867" width="1" height="2" fill="#777"/>
<rect x="619" y="867" width="1" height="2" fill="#777"/>
<rect x="656" y="867" width="1" height="2" fill="#777"/>
<rect x="694" y="867" width="1" height="2" fill="#777"/>
<rect x="731" y="867" width="1" height="2" fill="#777"/>
<rect x="769" y="867" width="1" height="2" fill="#777"/>
<rect x="807" y="867" width="1" height="2" fill="#777"/>
</svg>
<div class="t" style="right:900px;top:786.7px;font-size:10.5px">10.0</div>
<div class="t" style="right:900px;top:713.7px;font-size:10.5px">20.0</div>
<div class="t" style="right:900px;top:639.7px;font-size:10.5px">30.0</div>
<div class="t" style="right:900px;top:566.7px;font-size:10.5px">40.0</div>
<div class="t" style="right:900px;top:493.7px;font-size:10.5px">50.0</div>
<div class="t" style="right:900px;top:420.7px;font-size:10.5px">60.0</div>
<div class="t" style="right:900px;top:346.7px;font-size:10.5px">70.0</div>
<div class="t" style="right:900px;top:273.7px;font-size:10.5px">80.0</div>
<div class="t" style="right:900px;top:200.7px;font-size:10.5px">90.0</div>
<div class="t" style="right:900px;top:126.7px;font-size:10.5px">100.0</div>
<div class="t" style="left:55px;top:120px;font-size:10.5px">ms</div>
<div class="t" style="left:-5.0px;width:120px;text-align:center;top:871px;font-size:10.5px">0</div>
<div class="t" style="left:70.0px;width:120px;text-align:center;top:871px;font-size:10.5px">64</div>
<div class="t" style="left:145.0px;width:120px;text-align:center;top:871px;font-size:10.5px">128</div>
<div class="t" style="left:220.0px;width:120px;text-align:center;top:871px;font-size:10.5px">192</div>
<div class="t" style="left:295.0px;width:120px;text-align:center;top:871px;font-size:10.5px">256</div>
<div class="t" style="left:371.0px;width:120px;text-align:center;top:871px;font-size:10.5px">320</div>
<div class="t" style="left:446.0px;width:120px;text-align:center;top:871px;font-size:10.5px">384</div>
<div class="t" style="left:521.0px;width:120px;text-align:center;top:871px;font-size:10.5px">448</div>
<div class="t" style="left:596.0px;width:120px;text-align:center;top:871px;font-size:10.5px">512</div>
<div class="t" style="left:671.0px;width:120px;text-align:center;top:871px;font-size:10.5px">576</div>
<div class="t" style="left:747.0px;width:120px;text-align:center;top:871px;font-size:10.5px">640gB</div>
<div class="btn" style="left:842px;top:129px;width:73px;height:21px"></div>
<div class="t" style="left:842px;width:73px;text-align:center;top:135px;font-size:11px;letter-spacing:-0.45px">Start</div>
<div class="sep" style="left:833px;top:160px;width:101px"></div>
<svg class="a" style="left:837.5px;top:167px" width="14" height="28" viewBox="0 0 14 28"><circle cx="6.5" cy="6.5" r="5.5" fill="#f4f4f4" stroke="#8a8a8a"/><circle cx="6.5" cy="6.5" r="3.2" fill="#1a70b8"/><circle cx="6" cy="5.6" r="1.3" fill="#80d0ff"/><circle cx="6.5" cy="22.5" r="5.5" fill="#f0f0f0" stroke="#9a9a9a"/></svg>
<div class="t" style="left:854px;top:168px;font-size:11px;letter-spacing:-0.25px">Read</div>
<div class="t" style="left:854px;top:184px;font-size:11px;letter-spacing:-0.25px">Write</div>
<div class="sep" style="left:833px;top:199px;width:101px"></div>
<div class="chk" style="left:838px;top:207px"></div>
<div class="t" style="left:854px;top:208px;font-size:11px;letter-spacing:-0.25px">Short stroke</div>
<div class="a" style="left:838px;top:227px;width:62px;height:20px;border:1px solid #b5b5b5;border-radius:2px;background:#fff"></div>
<div class="a" style="left:883px;top:229px;width:16px;height:8px;border:1px solid #c8c8c8;background:#f2f2f2"></div>
<div class="a" style="left:883px;top:237px;width:16px;height:8px;border:1px solid #c8c8c8;background:#f2f2f2"></div>
<svg class="a" style="left:887px;top:231px" width="8" height="12"><path d="M1 4H7L4 1Z" fill="#a0a0a0"/><path d="M1 8H7L4 11Z" fill="#a0a0a0"/></svg>
<div class="t" style="left:841px;top:232px;font-size:11px;letter-spacing:-0.25px;color:#8a8a8a">40</div>
<div class="t" style="left:911px;top:232px;font-size:11px;letter-spacing:-0.25px">gB</div>
<div class="sep" style="left:833px;top:256px;width:99px"></div>
<div class="chk" style="left:838px;top:267px"></div>
<svg class="a" style="left:840px;top:268px" width="10" height="10"><path d="M1.5 5L4 8.5L8.5 1" stroke="#3c5a9a" stroke-width="1.6" fill="none"/></svg>
<div class="t" style="left:854px;top:269px;font-size:11px;letter-spacing:-0.25px">4 KB align</div>

<div class="t" style="left:47px;top:892.8px;font-size:12px;font-weight:bold">transfer size</div>
<div class="t" style="left:140px;top:892.8px;font-size:12px;font-weight:bold">operations / sec</div>
<div class="t" style="left:248px;top:892.8px;font-size:12px;font-weight:bold">avg. access time</div>
<div class="t" style="left:363px;top:892.8px;font-size:12px;font-weight:bold">max. access time</div>
<div class="t" style="left:487px;top:892.8px;font-size:12px;font-weight:bold">avg. speed</div>
<div class="a" style="left:40px;top:905px;width:521px;height:2px;background:#777"></div>
<div class="a" style="left:130px;top:891px;width:2px;height:104px;background:#777"></div>
<div class="a" style="left:239px;top:891px;width:2px;height:104px;background:#777"></div>
<div class="a" style="left:355px;top:891px;width:2px;height:104px;background:#777"></div>
<div class="a" style="left:465px;top:891px;width:2px;height:104px;background:#777"></div>
<div class="a" style="left:25px;top:914px;width:8px;height:8px;border:1px solid #000;background:#ffff00"></div>
<div class="chk" style="left:40px;top:911px"></div>
<svg class="a" style="left:42px;top:912px" width="10" height="10"><path d="M1.5 5L4 8.5L8.5 1" stroke="#3c5a9a" stroke-width="1.6" fill="none"/></svg>
<div class="t" style="left:56px;top:913.4px;font-size:11px;letter-spacing:-0.25px">512 bytes</div>
<div class="t" style="right:729px;top:910.5px;font-size:12px;font-weight:bold">59 IOPS</div>
<div class="t" style="right:620px;top:910.5px;font-size:12px;font-weight:bold">16.743 ms</div>
<div class="t" style="right:510px;top:910.5px;font-size:12px;font-weight:bold">39.052 ms</div>
<div class="t" style="right:402px;top:910.5px;font-size:12px;font-weight:bold">0.029 MB/s</div>
<div class="a" style="left:25px;top:930px;width:8px;height:8px;border:1px solid #000;background:#ff0000"></div>
<div class="chk" style="left:40px;top:927px"></div>
<svg class="a" style="left:42px;top:928px" width="10" height="10"><path d="M1.5 5L4 8.5L8.5 1" stroke="#3c5a9a" stroke-width="1.6" fill="none"/></svg>
<div class="t" style="left:56px;top:928.7px;font-size:11px;letter-spacing:-0.25px">4 KB</div>
<div class="t" style="right:729px;top:926.8px;font-size:12px;font-weight:bold">58 IOPS</div>
<div class="t" style="right:620px;top:926.8px;font-size:12px;font-weight:bold">16.950 ms</div>
<div class="t" style="right:510px;top:926.8px;font-size:12px;font-weight:bold">39.662 ms</div>
<div class="t" style="right:402px;top:926.8px;font-size:12px;font-weight:bold">0.230 MB/s</div>
<div class="a" style="left:25px;top:947px;width:8px;height:8px;border:1px solid #000;background:#00ff00"></div>
<div class="chk" style="left:40px;top:944px"></div>
<svg class="a" style="left:42px;top:945px" width="10" height="10"><path d="M1.5 5L4 8.5L8.5 1" stroke="#3c5a9a" stroke-width="1.6" fill="none"/></svg>
<div class="t" style="left:56px;top:945.5px;font-size:11px;letter-spacing:-0.25px">64 KB</div>
<div class="t" style="right:729px;top:943.6px;font-size:12px;font-weight:bold">56 IOPS</div>
<div class="t" style="right:620px;top:943.6px;font-size:12px;font-weight:bold">17.770 ms</div>
<div class="t" style="right:510px;top:943.6px;font-size:12px;font-weight:bold">38.890 ms</div>
<div class="t" style="right:402px;top:943.6px;font-size:12px;font-weight:bold">3.517 MB/s</div>
<div class="a" style="left:25px;top:964px;width:8px;height:8px;border:1px solid #000;background:#0080ff"></div>
<div class="chk" style="left:40px;top:961px"></div>
<svg class="a" style="left:42px;top:962px" width="10" height="10"><path d="M1.5 5L4 8.5L8.5 1" stroke="#3c5a9a" stroke-width="1.6" fill="none"/></svg>
<div class="t" style="left:56px;top:963.4px;font-size:11px;letter-spacing:-0.25px">1 MB</div>
<div class="t" style="right:729px;top:960.5px;font-size:12px;font-weight:bold">31 IOPS</div>
<div class="t" style="right:620px;top:960.5px;font-size:12px;font-weight:bold">31.477 ms</div>
<div class="t" style="right:510px;top:960.5px;font-size:12px;font-weight:bold">53.989 ms</div>
<div class="t" style="right:402px;top:960.5px;font-size:12px;font-weight:bold">31.769 MB/s</div>
<div class="a" style="left:25px;top:982px;width:8px;height:8px;border:1px solid #000;background:#00ffff"></div>
<div class="chk" style="left:40px;top:979px"></div>
<svg class="a" style="left:42px;top:980px" width="10" height="10"><path d="M1.5 5L4 8.5L8.5 1" stroke="#3c5a9a" stroke-width="1.6" fill="none"/></svg>
<div class="t" style="left:56px;top:980.1px;font-size:11px;letter-spacing:-0.25px">Random</div>
<div class="t" style="right:729px;top:979.0px;font-size:12px;font-weight:bold">41 IOPS</div>
<div class="t" style="right:620px;top:979.0px;font-size:12px;font-weight:bold">24.323 ms</div>
<div class="t" style="right:510px;top:979.0px;font-size:12px;font-weight:bold">46.421 ms</div>
<div class="t" style="right:402px;top:979.0px;font-size:12px;font-weight:bold">20.860 MB/s</div>

<svg class="a" style="left:660px;top:965px" width="80" height="71" viewBox="660 965 80 71">
  <defs>
    <linearGradient id="wmg" x1="0.9" y1="0.1" x2="0.2" y2="0.9"><stop offset="0" stop-color="#f4f8fe"/><stop offset=".45" stop-color="#d4e0f8"/><stop offset=".55" stop-color="#b8c8f0"/><stop offset="1" stop-color="#a4b4ea"/></linearGradient>
  </defs>
  <path d="M688.5 975.5L729.5 984L719 1025L671 1012.5Z" fill="#c8c8c8" stroke="#c8c8c8" stroke-width="7" stroke-linejoin="round"/>
  <path d="M688.5 975.5L729.5 984L719 1025L671 1012.5Z" fill="url(#wmg)" stroke="#f6f6f6" stroke-width="3.5" stroke-linejoin="round"/>
  <path d="M690.5 988L707 1009.5M685.5 1003L713.5 994.5" stroke="#fff" stroke-width="4" stroke-linecap="round"/>
</svg>
<div class="t" style="left:734px;top:989px;font-size:28px;color:#a4b2d6;-webkit-text-stroke:.7px #a4b2d6;transform:scaleX(.678);transform-origin:0 0;letter-spacing:0">xtremehardware.com</div>

</body></html>
